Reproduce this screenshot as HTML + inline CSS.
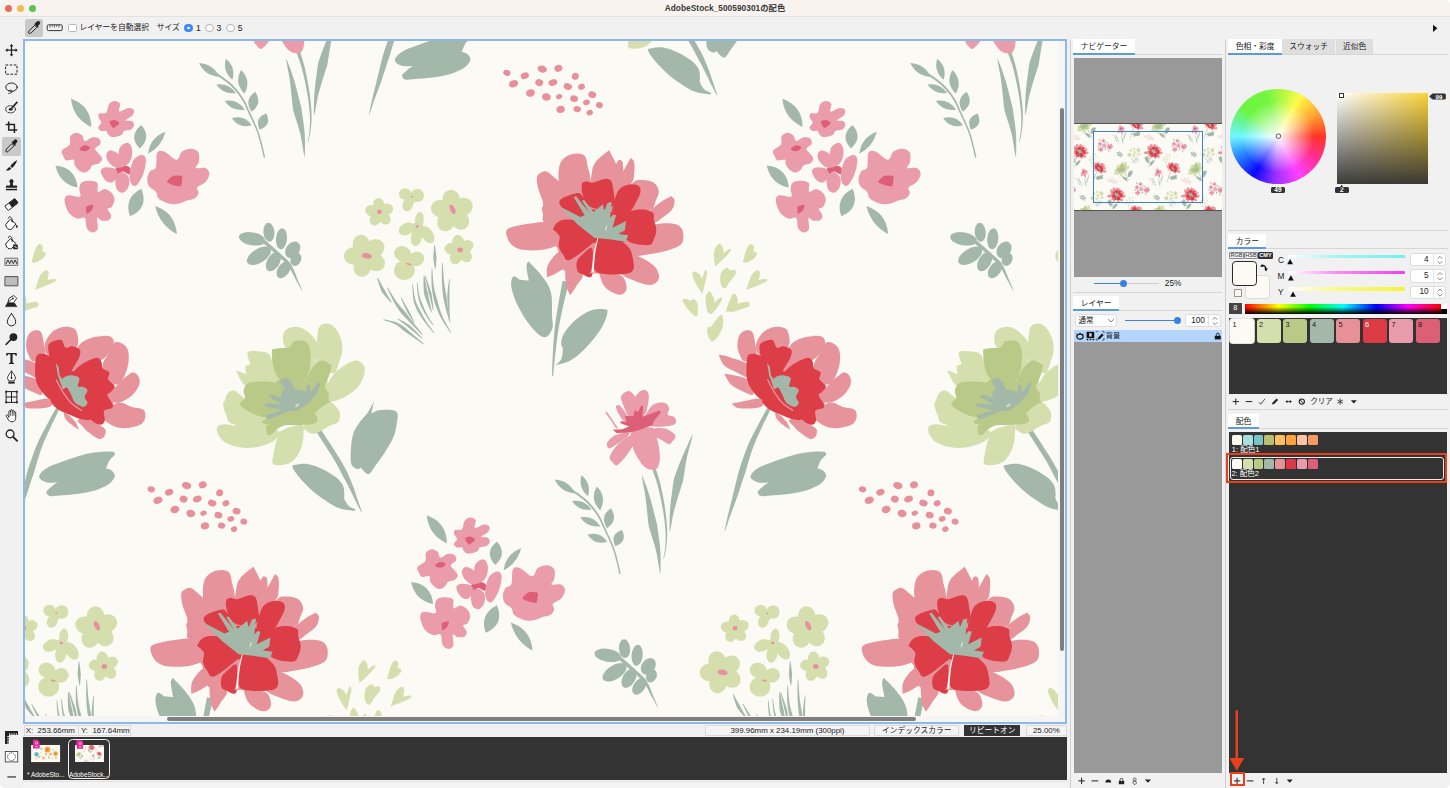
<!DOCTYPE html>
<html lang="ja">
<head>
<meta charset="utf-8">
<title>AdobeStock_500590301の配色</title>
<style>
*{box-sizing:border-box;margin:0;padding:0}
html,body{width:1450px;height:788px;overflow:hidden;background:#fff}
#win{left:0;top:0;width:1450px;height:788px;background:#f1f1f1;border-radius:5px}
body{position:relative;font-family:"Liberation Sans","Noto Sans CJK JP",sans-serif;font-size:9px;color:#222;-webkit-font-smoothing:antialiased}
.a{position:absolute}
.t{position:absolute;white-space:nowrap;line-height:1}
#titlebar{left:0;top:0;width:1450px;height:17px;background:#f8f3ee;border-bottom:1px solid #e6e1dc;border-radius:5px 5px 0 0}
.tl{position:absolute;top:4.8px;width:7.4px;height:7.4px;border-radius:50%}
#title{left:0;width:1450px;top:4px;text-align:center;font-weight:bold;font-size:8.3px;color:#3a3a3a;letter-spacing:0.05px}
.tab{position:absolute;background:#fff;border-bottom:2px solid #5a9ae0;font-size:8.6px;text-align:center;color:#222;line-height:1}
.tab2{position:absolute;background:#dfdfdf;font-size:8.6px;text-align:center;color:#222;line-height:1}
.hl{position:absolute;height:1px;background:#d6d6d6}
.vl{position:absolute;width:1px;background:#cfcfcf}
.box{position:absolute;background:#f4f4f4;border:1px solid #dadada;font-size:8.6px;line-height:1;text-align:center;white-space:nowrap;color:#222}
.num{position:absolute;background:#fff;border:1px solid #dcdcdc;border-radius:2.5px}
.sw{position:absolute;top:319px;width:24px;height:24.2px;border-radius:3px;font-size:7.4px;line-height:1;padding:1.6px 0 0 2.2px;color:#222}
.ms{position:absolute;width:9.9px;height:10px;border-radius:1.5px}
.lbl{position:absolute;background:#333;color:#fff;font-weight:bold;font-size:6.6px;line-height:6px;border-radius:1.5px;text-align:center}
</style>
</head>
<body>
<div class="a" id="win"></div>
<!-- title bar -->
<div class="a" id="titlebar"></div>
<div class="tl" style="left:4.7px;background:#ea6a5e"></div>
<div class="tl" style="left:16.7px;background:#f2bc4f"></div>
<div class="tl" style="left:28.8px;background:#5fc24f"></div>
<div class="t" id="title">AdobeStock_500590301の配色</div>

<!-- options bar -->
<div class="a" style="left:25px;top:19px;width:18px;height:18px;background:#c9c9c9;border-radius:2px"></div>
<svg class="a" style="left:25px;top:19px" width="18" height="18" viewBox="0 0 18 18">
  <path d="M4.2 14.6 L3.4 13.8 L4.3 11.6 L9.6 6.3 L11.7 8.4 L6.4 13.7 Z" fill="none" stroke="#222" stroke-width="1"/>
  <path d="M9.3 5.2 L12.8 8.7 L13.7 7.8 L12.9 7 L14.6 5.3 A1.9 1.9 0 0 0 11.9 2.6 L10.2 4.3 L10.2 4.3 Z" fill="#222"/>
</svg>
<svg class="a" style="left:46px;top:23px" width="18" height="10" viewBox="0 0 18 10">
  <rect x="1.2" y="1.8" width="15" height="5.8" rx="1.3" fill="none" stroke="#333" stroke-width="1"/>
  <path d="M4 2v2.6M6.2 2v1.8M8.4 2v2.6M10.6 2v1.8M12.8 2v2.6" stroke="#333" stroke-width="0.7" fill="none"/>
</svg>
<div class="a" style="left:68px;top:23.6px;width:8.8px;height:8.8px;background:#fff;border:0.8px solid #b9b9b9;border-radius:1.6px"></div>
<div class="t" id="t_auto" style="left:79.4px;top:24px;font-size:7.75px">レイヤーを自動選択</div>
<div class="t" id="t_size" style="left:156.8px;top:24px;font-size:7.75px">サイズ</div>
<div class="a" style="left:184.2px;top:23.7px;width:8.8px;height:8.8px;border-radius:50%;background:#fff;border:3px solid #3b8cec"></div>
<div class="t" style="left:196px;top:23.9px;font-size:8.6px">1</div>
<div class="a" style="left:205.4px;top:23.7px;width:8.8px;height:8.8px;border-radius:50%;background:#fff;border:0.8px solid #b5b5b5"></div>
<div class="t" style="left:216.6px;top:23.9px;font-size:8.6px">3</div>
<div class="a" style="left:226.4px;top:23.7px;width:8.8px;height:8.8px;border-radius:50%;background:#fff;border:0.8px solid #b5b5b5"></div>
<div class="t" style="left:237.7px;top:23.9px;font-size:8.6px">5</div>
<svg class="a" style="left:1431px;top:23px" width="8" height="10" viewBox="0 0 8 10"><path d="M2 1.7 L6.4 5.3 L2 8.9Z" fill="#111"/></svg>

<!-- left tools -->
<div class="a" style="left:2px;top:137px;width:18.5px;height:18.5px;background:#c9c9c9;border-radius:2px"></div>
<svg class="a" style="left:0;top:40px" width="24" height="410" viewBox="0 40 24 410" fill="none" stroke="#222" stroke-width="1.1" stroke-linecap="round" stroke-linejoin="round">
  <!-- move 50 -->
  <g transform="translate(11.5 50.2)"><path d="M-5 0H5M0 -5V5" stroke-width="1.2"/><path d="M-6.2 0l2.2-1.9v3.8zM6.2 0l-2.2-1.9v3.8zM0-6.2l-1.9 2.2h3.8zM0 6.2l-1.9-2.2h3.8z" fill="#222" stroke="none"/></g>
  <!-- marquee 69.5 -->
  <rect x="5.6" y="65" width="11.4" height="9.2" stroke-dasharray="2.6 1.5" stroke-linecap="butt" stroke-width="1"/>
  <!-- lasso 88 -->
  <g transform="translate(11.5 88.4)"><ellipse cx="0" cy="-1.2" rx="5.7" ry="4.2" stroke-width="1"/><path d="M-2.5 2.4c1.2-1.4 3.6-.6 3 1.1c-.5 1.3-2 1.5-3.3 1.5" stroke-width="0.9"/></g>
  <!-- quick select 108 -->
  <g transform="translate(11.5 108)"><ellipse cx="-1" cy="1.3" rx="5" ry="3.6" stroke-dasharray="2.2 1.2" stroke-width="0.9"/><path d="M5.4-5.6L0.6-0.2" stroke-width="1.7"/><ellipse cx="-0.8" cy="1.3" rx="1.9" ry="1.4" fill="#222" stroke="none"/></g>
  <!-- crop 127 -->
  <g transform="translate(11.5 127.2)" stroke-width="1.5" stroke-linecap="butt" stroke-linejoin="miter"><path d="M-2.8-5.8V2.9H5.8M-5.8-2.8H2.9V5.8"/></g>
  <!-- eyedropper 146.5 -->
  <g transform="translate(2.3 137.3)"><path d="M4.2 14.6 L3.4 13.8 L4.3 11.6 L9.6 6.3 L11.7 8.4 L6.4 13.7 Z" stroke-width="1"/><path d="M9.3 5.2 L12.8 8.7 L13.7 7.8 L12.9 7 L14.6 5.3 A1.9 1.9 0 0 0 11.9 2.6 L10.2 4.3 Z" fill="#222" stroke="none"/></g>
  <!-- brush 165.6 -->
  <g transform="translate(11.5 165.6)"><path d="M5.8-5.6C3-4.2 0.2-1.6-1.3 0.6L0.6 2.3C2.7 0.6 4.8-2.4 5.8-5.6Z" fill="#222" stroke="none"/><path d="M-1.9 1.3L-0.2 2.9C-1 4.6-3.6 5.4-5.9 4.7C-4.3 4.1-3.9 2.2-1.9 1.3Z" fill="#222" stroke="none"/></g>
  <!-- stamp 185 -->
  <g transform="translate(11.5 185.2)" fill="#222" stroke="none"><path d="M-1.3-2.2C-2.6-3.4-2.3-6 0-6C2.3-6 2.6-3.4 1.3-2.2L1.5 0.2H4.6C5.3 0.2 5.6 0.6 5.6 1.2V2.6H-5.6V1.2C-5.6 0.6-5.3 0.2-4.6 0.2H-1.5Z"/><rect x="-5.6" y="3.6" width="11.2" height="1.5"/></g>
  <!-- eraser 204.5 -->
  <g transform="translate(11.5 204.5) rotate(-38)"><rect x="-6.3" y="-2.8" width="12.6" height="5.6" rx="0.8" fill="#fff" stroke-width="0.9"/><rect x="-1.4" y="-2.8" width="7.7" height="5.6" rx="0.8" fill="#222" stroke="none"/></g>
  <!-- bucket 222.8 -->
  <g transform="translate(0 0)"><path d="M5.8 224.4L10.4 219.2L15.9 224L11.7 229.1C10 230 8 229.4 7 228Z" fill="#fff" stroke-width="1"/><path d="M8.3 218.2C8.6 215.6 12.2 216 12.3 221.2" stroke-width="0.9"/><circle cx="12.2" cy="221.6" r="0.8" fill="#222" stroke="none"/><path d="M16.8 224.6C18 226.4 18 227.9 16.8 227.9C15.6 227.9 15.6 226.4 16.8 224.6Z" fill="#222" stroke="none"/></g>
  <!-- bucket2 242.5 -->
  <g transform="translate(0 19.4)"><path d="M5.8 224.4L10.4 219.2L15.9 224L11.7 229.1C10 230 8 229.4 7 228Z" fill="#fff" stroke-width="1"/><path d="M8.3 218.2C8.6 215.6 12.2 216 12.3 221.2" stroke-width="0.9"/><circle cx="12.2" cy="221.6" r="0.8" fill="#222" stroke="none"/><rect x="13.2" y="225.2" width="4.6" height="4.6" fill="#222" stroke="none"/><rect x="14.4" y="226.4" width="1.1" height="1.1" fill="#fff" stroke="none"/><rect x="15.5" y="227.5" width="1.1" height="1.1" fill="#fff" stroke="none"/></g>
  <!-- wave 262 -->
  <g transform="translate(11.5 261.8)"><rect x="-6.2" y="-3.6" width="12.4" height="7.2" fill="#ddd" stroke="#444" stroke-width="0.7"/><path d="M-5.4 1.8L-3.6-1.8L-1.8 1.8L0-1.8L1.8 1.8L3.6-1.8L5.4 1.8" stroke-width="0.9"/></g>
  <!-- rect 281 -->
  <rect x="5.3" y="276.6" width="12.6" height="9.2" fill="#bdbdbd" stroke="#444" stroke-width="0.9"/>
  <!-- pen-layer 300.7 -->
  <g transform="translate(11.5 300.7)"><path d="M-6.2 5.6L-4.4 2.2H3.2L5.4 5.6Z" fill="#222" stroke="none"/><path d="M-6 5.9H5.4" stroke-width="0.8"/><path d="M-3.6 1.6L-2.3-2.6L2.4-5.2L5.2-2.4L2.2 1.9Z" fill="#fff" stroke-width="0.9"/><path d="M-3.3 1.3L0.6-1.6" stroke-width="0.8"/><circle cx="1.4" cy="-2.2" r="0.9" fill="#222" stroke="none"/></g>
  <!-- drop 320 -->
  <path d="M11.5 313.6C13.6 316.6 15.7 319.2 15.7 321.7A4.2 4.2 0 0 1 7.3 321.7C7.3 319.2 9.4 316.6 11.5 313.6Z" stroke-width="1"/>
  <!-- dodge 339 -->
  <g transform="translate(11.5 339)"><circle cx="1.9" cy="-1.9" r="3.9" fill="#222" stroke="none"/><path d="M-0.8 0.8L-5.4 5.4" stroke-width="1.5"/></g>
  <!-- T 358.5 -->
  <g transform="translate(11.5 358.5)" fill="#222" stroke="none"><path d="M-5.2-5.4H5.2V-2.6H4.3C4.1-3.7 3.6-4.2 2.4-4.2H1.1V3.6C1.1 4.4 1.5 4.6 2.6 4.7V5.4H-2.6V4.7C-1.5 4.6-1.1 4.4-1.1 3.6V-4.2H-2.4C-3.6-4.2-4.1-3.7-4.3-2.6H-5.2Z"/></g>
  <!-- pen 377.5 -->
  <g transform="translate(11.5 377.5)"><path d="M0-6.4C1.4-4.3 4-1.6 4 0.8L2.7 3.4H-2.7L-4 0.8C-4-1.6-1.4-4.3 0-6.4Z" fill="#fff" stroke-width="0.9"/><path d="M0-5.6V-0.4" stroke-width="0.8"/><circle cx="0" cy="0.4" r="1" fill="#222" stroke="none"/><rect x="-3.2" y="4.2" width="6.4" height="1.9" fill="#222" stroke="none"/></g>
  <!-- grid 397 -->
  <g transform="translate(11.5 397)" stroke-width="1" stroke-linecap="butt"><rect x="-5.4" y="-5.4" width="10.8" height="10.8"/><path d="M-5.4 0H5.4M0-5.4V5.4"/><g fill="#222" stroke="none"><rect x="-6.3" y="-6.3" width="1.9" height="1.9"/><rect x="4.4" y="-6.3" width="1.9" height="1.9"/><rect x="-6.3" y="4.4" width="1.9" height="1.9"/><rect x="4.4" y="4.4" width="1.9" height="1.9"/></g></g>
  <!-- hand 415.8 -->
  <g transform="translate(11.5 415.8)"><path d="M-2.6 1.2V-4.2C-2.6-5.4-0.9-5.4-0.9-4.2V-5.3C-0.9-6.5 0.8-6.5 0.8-5.3V-4.6C0.8-5.8 2.5-5.8 2.5-4.6V-3.2C2.5-4.3 4.2-4.3 4.2-3.2V2C4.2 4.4 2.8 6 0.6 6C-1.6 6-2.6 4.9-3.6 3.2L-5.2 0.4C-5.7-0.6-4.4-1.4-3.7-0.5Z" fill="#fff" stroke-width="0.9"/><path d="M-0.9-4.2V-0.4M0.8-4.6V-0.4M2.5-3.2V-0.2" stroke-width="0.7"/></g>
  <!-- zoom 435.3 -->
  <g transform="translate(11.5 435.3)"><circle cx="-1.4" cy="-1.4" r="3.9" stroke-width="1.3"/><path d="M1.6 1.6L5.6 5.6" stroke-width="1.8"/></g>
</svg>

<!-- left bottom icons -->
<svg class="a" style="left:0;top:726px" width="24" height="60" viewBox="0 726 24 60" fill="#222">
  <path d="M5 731H18V735H16.8V733.2H15.8V735H14.6V733.2H13.6V735H12.4V733.2H11.4V735H10.2V733.2H9.2V735H9V736H7.2V737H9V738.2H7.2V739.2H9V740.4H7.2V741.4H9V742.6H7.2V743.6H9V744H5Z"/>
  <rect x="5.3" y="751.5" width="12.4" height="10.4" fill="#fff" stroke="#444" stroke-width="0.9"/>
  <circle cx="11.5" cy="756.7" r="3.9" fill="none" stroke="#333" stroke-width="0.8" stroke-dasharray="1.6 0.8"/>
  <rect x="7.4" y="776.4" width="8.6" height="1.1"/>
</svg>
<!-- canvas frame -->
<div class="a" style="left:23px;top:39px;width:1044px;height:685.4px;background:#f5f5f5;border:2px solid #8fb7e8"></div>
<svg class="a" style="left:25px;top:41px" width="1033.4" height="675" viewBox="25 41 1033.4 675"><defs><g id="cell">
<!-- a_redflower.svg -->
<g transform="translate(490 250) scale(0.16552)">
<path d="M438.5 185.7L436.6 196.5L434 210.8L430.8 227.8L427.2 246.8L423.3 267L419.5 287.6L415.8 307.8L412.5 327L409.5 345.3L406.6 363.8L403.6 382.5L400.7 401.4L397.9 420.4L395.3 439.6L392.8 458.9L390.6 478.5L388.6 498.5L386.7 519L385.1 539.9L383.5 560.9L382.2 581.5L380.9 601.7L379.8 621.1L378.8 639.4L377.9 657.4L377.1 675.6L376.4 693.5L375.9 710.7L375.5 726.6L375.2 740.7L375 752.6L375 761.8L381 762.2L382.1 753.1L383.3 741.2L384.6 727.1L386.1 711.3L387.7 694.3L389.4 676.5L391.3 658.4L393.2 640.6L395.3 622.4L397.5 603.2L399.8 583.1L402.2 562.6L404.8 541.9L407.5 521.3L410.4 501.1L413.4 481.5L416.6 462.5L420.1 443.5L423.8 424.8L427.5 406.1L431.4 387.6L435.4 369.3L439.4 351.1L443.5 333L447.7 314.3L452.4 294.5L457.2 274.3L462.1 254.4L466.7 235.8L471 219L474.7 204.9L477.5 194.3Z" fill="#a4b8aa"/>
<path d="M232 70C232 70 280.3 116.7 300 140C319.7 163.3 338 186.7 350 210C362 233.3 367.8 248.3 372 280C376.2 311.7 374 368.3 375 400C376 431.7 383 449.7 378 470C373 490.3 358 514.5 345 522C332 529.5 319.2 528.7 300 515C280.8 501.3 251.7 469.2 230 440C208.3 410.8 185.8 371.7 170 340C154.2 308.3 142 275 135 250C128 225 126.3 205.3 128 190C129.7 174.7 136.3 159.7 145 158C153.7 156.3 180 180 180 180C180 180 235 185 235 185C235 185 220.5 119.2 220 100C219.5 80.8 232 70 232 70Z" fill="#a4b8aa"/>
<path d="M395 695C395 695 422.5 675.8 430 660C437.5 644.2 440 616.7 440 600C440 583.3 428.3 576.7 430 560C431.7 543.3 435 523.3 450 500C465 476.7 493.3 442.5 520 420C546.7 397.5 581.7 375.3 610 365C638.3 354.7 673.3 356.8 690 358C706.7 359.2 710 358.3 710 372C710 385.7 701.7 415.3 690 440C678.3 464.7 661.7 491.7 640 520C618.3 548.3 586.7 585 560 610C533.3 635 507.5 655.8 480 670C452.5 684.2 395 695 395 695Z" fill="#a4b8aa"/>
<path d="M345 165C345 165 337.5 115.8 350 90C362.5 64.2 400 15 420 10C440 5 461.7 45.8 470 60C478.3 74.2 481.7 81.7 470 95C458.3 108.3 420.8 128.3 400 140C379.2 151.7 345 165 345 165Z" fill="#e7939b"/>
<path d="M455 100C456.7 70.8 452.5 33.3 470 40C487.5 46.7 551.7 110 560 140C568.3 170 532.5 198 520 220C507.5 242 485 272 485 272C485 272 465 243.7 460 215C455 186.3 453.3 129.2 455 100Z" fill="#e7939b"/>
<path d="M650 70C654.2 60 675 115 700 130C725 145 779.2 142.5 800 160C820.8 177.5 827.5 216.7 825 235C822.5 253.3 802.5 268.3 785 270C767.5 271.7 738.3 258.3 720 245C701.7 231.7 686.7 219.2 675 190C663.3 160.8 645.8 80 650 70Z" fill="#e7939b"/>
<path d="M850 30C871.7 20 876.7 29.2 900 40C923.3 50.8 970 76.7 990 95C1010 113.3 1016.7 134.2 1020 150C1023.3 165.8 1020 179.7 1010 190C1000 200.3 983.3 212.8 960 212C936.7 211.2 896.7 195.3 870 185C843.3 174.7 816.7 164.2 800 150C783.3 135.8 761.7 120 770 100C778.3 80 828.3 40 850 30Z" fill="#e7939b"/>
<path d="M860 -10C890.8 -16.2 1051.7 -9.2 1075 -5C1098.3 -0.8 1030.8 8.8 1000 15C969.2 21.2 913.3 36.2 890 32C866.7 27.8 829.2 -3.8 860 -10Z" fill="#e7939b"/>
<path d="M525 80C531.7 65.8 554.7 39.2 570 25C585.3 10.8 608.3 -15.8 617 -5C625.7 5.8 621.8 64.2 622 90C622.2 115.8 621.7 137.5 618 150C614.3 162.5 609.7 165.8 600 165C590.3 164.2 571.7 154.2 560 145C548.3 135.8 535.8 120.8 530 110C524.2 99.2 518.3 94.2 525 80Z" fill="#dd3d46"/>
<path d="M638 -10C671.3 -21.7 813 -25 850 -10C887 5 862.5 57.5 860 80C857.5 102.5 846.7 115.8 835 125C823.3 134.2 805 135.8 790 135C775 134.2 745 120 745 120C745 120 730.8 145 720 145C709.2 145 691.7 134.2 680 120C668.3 105.8 657 81.7 650 60C643 38.3 604.7 1.7 638 -10Z" fill="#dd3d46"/>
<path d="M420 -10C442.5 -18.3 556.7 -18.3 575 -10C593.3 -1.7 547.5 28 530 40C512.5 52 485 62 470 62C455 62 448.3 52 440 40C431.7 28 397.5 -1.7 420 -10Z" fill="#dd3d46"/>
</g>
<g transform="translate(490 140) scale(0.16552)">
<path d="M283 232C283.8 212 294.7 206.7 305 200C315.3 193.3 325.8 183.7 345 192C364.2 200.3 384.2 227 420 250C455.8 273 550 301.7 560 330C570 358.3 515 408.3 480 420C445 431.7 380 416.7 350 400C320 383.3 311.2 348 300 320C288.8 292 282.2 252 283 232Z" fill="#e7939b"/>
<path d="M415 185C417.5 166.7 420.8 145 430 130C439.2 115 453.3 103 470 95C486.7 87 512.5 81.2 530 82C547.5 82.8 565 87 575 100C585 113 585 139.2 590 160C595 180.8 603.3 196.7 605 225C606.7 253.3 629.2 317.5 600 330C570.8 342.5 460.8 315 430 300C399.2 285 417.5 259.2 415 240C412.5 220.8 412.5 203.3 415 185Z" fill="#e7939b"/>
<path d="M615 200C618.3 171.7 622.5 153 640 130C657.5 107 720 62 720 62C720 62 738 96.2 745 110C752 123.8 762 145 762 145C762 145 775 122 775 122C775 122 795 118.7 800 130C805 141.3 805 190 805 190C805 190 850 108 850 108C850 108 866.3 116.3 870 130C873.7 143.7 874.5 168.3 872 190C869.5 211.7 873.7 236.7 855 260C836.3 283.3 799.2 323.3 760 330C720.8 336.7 644.2 321.7 620 300C595.8 278.3 611.7 228.3 615 200Z" fill="#e7939b"/>
<path d="M860 262C880 239 898.3 242.7 920 242C941.7 241.3 973.3 246.7 990 258C1006.7 269.3 1018.3 291.3 1020 310C1021.7 328.7 1007.5 351.7 1000 370C992.5 388.3 996.7 408.3 975 420C953.3 431.7 899.2 446.7 870 440C840.8 433.3 801.7 409.7 800 380C798.3 350.3 840 285 860 262Z" fill="#e7939b"/>
<path d="M975 420C998.3 401.7 1020 383.3 1040 370C1060 356.7 1095 340 1095 340C1095 340 1114.2 351.7 1115 365C1115.8 378.3 1112.5 402.5 1100 420C1087.5 437.5 1058.3 456.7 1040 470C1021.7 483.3 1013.3 498.3 990 500C966.7 501.7 902.5 493.3 900 480C897.5 466.7 951.7 438.3 975 420Z" fill="#e7939b"/>
<path d="M1000 510C1041.7 500.8 1075 502.5 1100 505C1125 507.5 1138.7 514.2 1150 525C1161.3 535.8 1167.2 552.5 1168 570C1168.8 587.5 1169.7 614.2 1155 630C1140.3 645.8 1112.5 655 1080 665C1047.5 675 998.3 685.8 960 690C921.7 694.2 868.3 711.7 850 690C831.7 668.3 825 590 850 560C875 530 958.3 519.2 1000 510Z" fill="#e7939b"/>
<path d="M100 545C110 527.5 143.3 523.3 180 515C216.7 506.7 280 499.2 320 495C360 490.8 398.3 472.5 420 490C441.7 507.5 453.3 575 450 600C446.7 625 425 629.2 400 640C375 650.8 336.7 661.7 300 665C263.3 668.3 210 667.5 180 660C150 652.5 133.3 639.2 120 620C106.7 600.8 90 562.5 100 545Z" fill="#e7939b"/>
<path d="M315 405C320 395.8 330.8 392.5 350 395C369.2 397.5 413.3 404.2 430 420C446.7 435.8 466.7 477.5 450 490C433.3 502.5 351.7 501.7 330 495C308.3 488.3 322.5 465 320 450C317.5 435 310 414.2 315 405Z" fill="#e7939b"/>
<path d="M420 640C440 620 513.3 603.3 560 600C606.7 596.7 650 605 700 620C750 635 826.7 673.3 860 690C893.3 706.7 875 703.3 900 720C925 736.7 1016.7 776.7 1010 790C1003.3 803.3 948.3 798.3 860 800C771.7 801.7 550 813.3 480 800C410 786.7 450 746.7 440 720C430 693.3 400 660 420 640Z" fill="#e7939b"/>
<path d="M330 300C366.7 241.7 511.7 250 600 250C688.3 250 801.7 258.3 860 300C918.3 341.7 950 436.7 950 500C950 563.3 935 646.7 860 680C785 713.3 580 713.3 500 700C420 686.7 408.3 666.7 380 600C351.7 533.3 293.3 358.3 330 300Z" fill="#e7939b"/>
<path d="M520 420C550 405 645 425 700 430C755 435 816.7 435 850 450C883.3 465 908.3 491.7 900 520C891.7 548.3 841.7 601.7 800 620C758.3 638.3 696.7 646.7 650 630C603.3 613.3 541.7 555 520 520C498.3 485 490 435 520 420Z" fill="#dd3d46"/>
<path d="M555 265C558.3 251.7 569.2 251.2 580 250C590.8 248.8 601.7 260.5 620 258C638.3 255.5 671.7 237.2 690 235C708.3 232.8 720.8 234.2 730 245C739.2 255.8 741.7 277.5 745 300C748.3 322.5 757.5 360 750 380C742.5 400 725 416.7 700 420C675 423.3 623.3 415 600 400C576.7 385 567.5 352.5 560 330C552.5 307.5 551.7 278.3 555 265Z" fill="#dd3d46"/>
<path d="M760 340C768.3 315 775 302 790 290C805 278 831.7 269.7 850 268C868.3 266.3 890.3 271.3 900 280C909.7 288.7 911.3 303.3 908 320C904.7 336.7 889.7 361.7 880 380C870.3 398.3 863.3 415 850 430C836.7 445 818.3 468.3 800 470C781.7 471.7 746.7 461.7 740 440C733.3 418.3 751.7 365 760 340Z" fill="#dd3d46"/>
<path d="M850 430C873.3 420 907.5 418.3 930 420C952.5 421.7 975 430 985 440C995 450 986.7 463.3 990 480C993.3 496.7 1005 520 1005 540C1005 560 997.5 584.2 990 600C982.5 615.8 983.3 631.7 960 635C936.7 638.3 876.7 632.5 850 620C823.3 607.5 810 583.3 800 560C790 536.7 781.7 501.7 790 480C798.3 458.3 826.7 440 850 430Z" fill="#dd3d46"/>
<path d="M420 385C415 370 421.7 360.8 440 350C458.3 339.2 510 321.7 530 320C550 318.3 548.3 326.7 560 340C571.7 353.3 600 376.7 600 400C600 423.3 581.7 473.3 560 480C538.3 486.7 493.3 455.8 470 440C446.7 424.2 425 400 420 385Z" fill="#dd3d46"/>
<path d="M380 540C380 540 391.7 510 405 500C418.3 490 434.2 480 460 480C485.8 480 530 481.7 560 500C590 518.3 633.3 566.7 640 590C646.7 613.3 626.7 617.5 600 640C573.3 662.5 506.7 716.7 480 725C453.3 733.3 450.8 704.2 440 690C429.2 675.8 418.3 658.3 415 640C411.7 621.7 425.8 596.7 420 580C414.2 563.3 380 540 380 540Z" fill="#dd3d46"/>
<path d="M645 620C650 601.7 640.8 593.3 660 590C679.2 586.7 731.7 591.7 760 600C788.3 608.3 813.3 623.3 830 640C846.7 656.7 856.7 673.3 860 700C863.3 726.7 885 783.3 850 800C815 816.7 686.7 816.7 650 800C613.3 783.3 630.8 730 630 700C629.2 670 640 638.3 645 620Z" fill="#dd3d46"/>
<path d="M525 735C529.2 716.7 544.5 703.3 560 690C575.5 676.7 610.3 636.7 618 655C625.7 673.3 619.8 775.8 606 800C592.2 824.2 548.5 810.8 535 800C521.5 789.2 520.8 753.3 525 735Z" fill="#dd3d46"/>
<path d="M420 400L545 465L572 455L505 345L520 340L600 440L555 365L570 362L625 435L682 388L690 430L710 380L735 375L725 470L745 450L762 455L740 530L822 490L815 545L775 568L835 575L820 615L720 600L630 590L530 510Z" fill="#a4b8aa"/>
<path d="M698 545C699.3 540.8 704.7 524.2 706 520" fill="none" stroke="#fbfaf5" stroke-width="5" stroke-linecap="round"/>
<path d="M649.6 591.4L647.8 597.9L645.4 606.3L642.6 616.4L639.5 627.7L636.3 640L633.2 652.9L630.3 666.1L627.8 679.4L625.6 693.7L623.5 710.1L621.5 727.5L619.6 745L617.9 761.9L616.4 777.2L615.1 790L614 799.5L626 800.5L626.6 791L627.5 778.2L628.6 762.8L629.9 746L631.3 728.4L632.8 711.1L634.5 694.8L636.2 680.6L638.2 667.6L640.6 654.5L643.3 641.6L646 629.3L648.7 617.9L651.1 607.8L653 599.2L654.4 592.6Z" fill="#fbfaf5"/>
</g>
<!-- b_pinkcluster.svg -->
<g transform="translate(40 88) scale(0.13793)">
<path d="M225 78Q240.1 222.1 372 282Q369.9 128.6 225 78Z" fill="#a4b8aa"/>
<path d="M735 268Q636.8 346 722 438Q812.3 359.4 735 268Z" fill="#a4b8aa"/>
<path d="M910 318Q798.1 358.8 783 477Q882.4 426.2 910 318Z" fill="#a4b8aa"/>
<path d="M112 562Q139.7 694.3 272 722Q258.5 575.5 112 562Z" fill="#a4b8aa"/>
<path d="M540 95C553.3 94.2 574.2 102.5 580 115C585.8 127.5 565 165 575 170C585 175 622.5 146.7 640 145C657.5 143.3 675 150.8 680 160C685 169.2 680 187.5 670 200C660 212.5 620.8 228.3 620 235C619.2 241.7 654.7 234.2 665 240C675.3 245.8 682.8 260 682 270C681.2 280 672 293.3 660 300C648 306.7 621.7 303.3 610 310C598.3 316.7 605 332.5 590 340C575 347.5 536.7 356.7 520 355C503.3 353.3 496.7 337.5 490 330C483.3 322.5 488.3 313.3 480 310C471.7 306.7 449.7 314.2 440 310C430.3 305.8 421.2 295 422 285C422.8 275 444.5 261.7 445 250C445.5 238.3 427.5 225.8 425 215C422.5 204.2 420.8 190.8 430 185C439.2 179.2 468.3 190.8 480 180C491.7 169.2 490 134.2 500 120C510 105.8 526.7 95.8 540 95Z" fill="#ea9cab"/>
<path d="M505 245C508.3 237 528.3 230.3 540 232C551.7 233.7 575.8 245.7 575 255C574.2 264.3 544.2 283.8 535 288C525.8 292.2 525 287.2 520 280C515 272.8 501.7 253 505 245Z" fill="#dc5f77"/>
<path d="M265 325C279.2 324.2 295 335 305 345C315 355 313.3 382.8 325 385C336.7 387.2 358.3 361.3 375 358C391.7 354.7 414.5 357.2 425 365C435.5 372.8 442.2 392.5 438 405C433.8 417.5 403 429.2 400 440C397 450.8 411.7 458.3 420 470C428.3 481.7 448.3 497.5 450 510C451.7 522.5 441.7 536.7 430 545C418.3 553.3 391.7 552.5 380 560C368.3 567.5 370 581.3 360 590C350 598.7 333.3 611.2 320 612C306.7 612.8 291.7 604.5 280 595C268.3 585.5 255.8 567.5 250 555C244.2 542.5 255 525 245 520C235 515 202.5 529.2 190 525C177.5 520.8 175.3 506.7 170 495C164.7 483.3 150.5 469.2 158 455C165.5 440.8 204.7 427.5 215 410C225.3 392.5 211.7 364.2 220 350C228.3 335.8 250.8 325.8 265 325Z" fill="#ea9cab"/>
<path d="M290 435C295 428.3 318 415.5 330 415C342 414.5 360.3 425.3 362 432C363.7 438.7 350.3 451.2 340 455C329.7 458.8 308.3 458.3 300 455C291.7 451.7 285 441.7 290 435Z" fill="#dc5f77"/>
<path d="M545 590C549.2 579.2 572.5 562.5 590 560C607.5 557.5 640 564.2 650 575C660 585.8 658.3 620 650 625C641.7 630 614.2 605 600 605C585.8 605 574.2 627.5 565 625C555.8 622.5 540.8 600.8 545 590Z" fill="#dc5f77"/>
<path d="M625 398C638.3 396.3 652.8 406.3 660 420C667.2 433.7 671.3 458.3 668 480C664.7 501.7 658 533.3 640 550C622 566.7 583.3 581.7 560 580C536.7 578.3 513.3 555 500 540C486.7 525 480 504.2 480 490C480 475.8 490 460 500 455C510 450 528.3 455.8 540 460C551.7 464.2 570 480 570 480C570 480 570.8 443.7 580 430C589.2 416.3 611.7 399.7 625 398Z" fill="#ea9cab"/>
<path d="M740 485C754.7 485 766.3 497.5 768 520C769.7 542.5 761.3 589.2 750 620C738.7 650.8 715 693.3 700 705C685 716.7 668.3 704.2 660 690C651.7 675.8 646.7 648.3 650 620C653.3 591.7 665 542.5 680 520C695 497.5 725.3 485 740 485Z" fill="#ea9cab"/>
<path d="M440 600C441.7 585 461.7 576.7 480 575C498.3 573.3 536.7 579.2 550 590C563.3 600.8 565 624.2 560 640C555 655.8 535 680.8 520 685C505 689.2 483.3 679.2 470 665C456.7 650.8 438.3 615 440 600Z" fill="#ea9cab"/>
<path d="M550 640C557.5 620 584.2 608.3 600 610C615.8 611.7 638.3 631.7 645 650C651.7 668.3 647.5 701.7 640 720C632.5 738.3 614.2 758.3 600 760C585.8 761.7 563.3 750 555 730C546.7 710 542.5 660 550 640Z" fill="#ea9cab"/>
</g>
<g transform="translate(40 160) scale(0.13793)">
<path d="M735 208Q606.7 272 652 408Q791.4 348.6 735 208Z" fill="#a4b8aa"/>
<path d="M835 333Q867.5 470.4 992 537Q981.7 382.5 835 333Z" fill="#a4b8aa"/>
<path d="M850 -52C860 -71.5 876.7 -70.3 900 -62C923.3 -53.7 968.3 -2 990 -2C1011.7 -2 1011.7 -48.7 1030 -62C1048.3 -75.3 1080 -83.7 1100 -82C1120 -80.3 1141.7 -68.7 1150 -52C1158.3 -35.3 1153.3 -0.3 1150 18C1146.7 36.3 1121.7 51.3 1130 58C1138.3 64.7 1183.7 51 1200 58C1216.3 65 1228 83 1228 100C1228 117 1214.7 143.3 1200 160C1185.3 176.7 1148.3 186.7 1140 200C1131.7 213.3 1153.3 226.7 1150 240C1146.7 253.3 1135 270.8 1120 280C1105 289.2 1080 288.7 1060 295C1040 301.3 1021.7 314.7 1000 318C978.3 321.3 953.3 321.3 930 315C906.7 308.7 875 294.2 860 280C845 265.8 851.7 245 840 230C828.3 215 800.3 206.7 790 190C779.7 173.3 776.3 148.3 778 130C779.7 111.7 789.7 92.5 800 80C810.3 67.5 831.7 77 840 55C848.3 33 840 -32.5 850 -52Z" fill="#ea9cab"/>
<path d="M920 158C920.5 151.5 954 119 965 115C976 111 1024.5 110.5 1030 118C1035.5 125.5 1027 183.8 1020 190C1013 196.2 970 183.2 960 180C950 176.8 919.5 164.5 920 158Z" fill="#dc5f77"/>
<path d="M300 165C310.8 155 330.8 150 350 150C369.2 150 403.3 151.7 415 165C426.7 178.3 410.8 222.5 420 230C429.2 237.5 453.3 208.3 470 210C486.7 211.7 508.3 226.7 520 240C531.7 253.3 540 273.3 540 290C540 306.7 528.3 329.2 520 340C511.7 350.8 490.8 345 490 355C489.2 365 513.3 386.7 515 400C516.7 413.3 510.8 428.3 500 435C489.2 441.7 464.2 442.5 450 440C435.8 437.5 420.3 410 415 420C409.7 430 423.8 482.5 418 500C412.2 517.5 393 525.8 380 525C367 524.2 349.2 512.5 340 495C330.8 477.5 336.7 431.7 325 420C313.3 408.3 288.3 430 270 425C251.7 420 229.2 405.8 215 390C200.8 374.2 190.8 349.2 185 330C179.2 310.8 175.8 287.5 180 275C184.2 262.5 191.7 256.7 210 255C228.3 253.3 277.5 272.5 290 265C302.5 257.5 283.3 226.7 285 210C286.7 193.3 289.2 175 300 165Z" fill="#ea9cab"/>
<path d="M335 340C339.5 333.5 381 322.5 385 325C389 327.5 379.5 358.5 375 365C370.5 371.5 344 392.5 340 390C336 387.5 330.5 346.5 335 340Z" fill="#dc5f77"/>
</g>
<!-- c_dots.svg -->
<g transform="translate(380 36) scale(0.24879)">
<ellipse cx="510" cy="148" rx="15" ry="12" transform="rotate(15 510 148)" fill="#e8909a"/>
<ellipse cx="582" cy="160" rx="17" ry="13" transform="rotate(-20 582 160)" fill="#e8909a"/>
<ellipse cx="652" cy="133" rx="19" ry="14" transform="rotate(15 652 133)" fill="#e8909a"/>
<ellipse cx="717" cy="130" rx="16" ry="14" transform="rotate(-20 717 130)" fill="#e8909a"/>
<ellipse cx="785" cy="162" rx="14" ry="14" transform="rotate(15 785 162)" fill="#e8909a"/>
<ellipse cx="537" cy="192" rx="19" ry="14" transform="rotate(-20 537 192)" fill="#e8909a"/>
<ellipse cx="640" cy="187" rx="16" ry="14" transform="rotate(15 640 187)" fill="#e8909a"/>
<ellipse cx="695" cy="187" rx="18" ry="13" transform="rotate(-20 695 187)" fill="#e8909a"/>
<ellipse cx="755" cy="203" rx="17" ry="13" transform="rotate(15 755 203)" fill="#e8909a"/>
<ellipse cx="810" cy="204" rx="14" ry="12" transform="rotate(-20 810 204)" fill="#e8909a"/>
<ellipse cx="853" cy="236" rx="16" ry="13" transform="rotate(15 853 236)" fill="#e8909a"/>
<ellipse cx="605" cy="229" rx="18" ry="15" transform="rotate(-20 605 229)" fill="#e8909a"/>
<ellipse cx="669" cy="245" rx="18" ry="15" transform="rotate(15 669 245)" fill="#e8909a"/>
<ellipse cx="720" cy="244" rx="13" ry="10" transform="rotate(-20 720 244)" fill="#e8909a"/>
<ellipse cx="780" cy="252" rx="16" ry="13" transform="rotate(15 780 252)" fill="#e8909a"/>
<ellipse cx="830" cy="267" rx="14" ry="11" transform="rotate(-20 830 267)" fill="#e8909a"/>
<ellipse cx="882" cy="278" rx="14" ry="12" transform="rotate(15 882 278)" fill="#e8909a"/>
<ellipse cx="726" cy="295" rx="17" ry="14" transform="rotate(-20 726 295)" fill="#e8909a"/>
<ellipse cx="793" cy="294" rx="15" ry="12" transform="rotate(15 793 294)" fill="#e8909a"/>
<ellipse cx="843" cy="308" rx="13" ry="11" transform="rotate(-20 843 308)" fill="#e8909a"/>
</g>
<!-- d_pinkstem.svg -->
<g transform="translate(545 470) scale(0.13793)">
<path d="M195.6 156.1L203.6 161.7L214.2 169.1L226.9 177.7L240.8 187.5L255.3 197.9L269.7 208.7L283.2 219.6L295.2 230.1L306.2 240.8L317.1 251.9L327.7 263.5L338 275.3L347.8 287.3L357.3 299.4L366.2 311.5L374.6 323.6L382 335.2L388.6 346.3L394.4 357.3L400 368.6L405.5 380.4L411.2 393.2L417.5 407.1L424.6 422.5L432.6 439.6L441.4 457.9L450.6 477.4L460.1 497.7L469.5 518.5L478.6 539.7L487.1 560.9L494.8 581.8L501.9 603.9L508.9 628.2L515.5 653.5L521.8 678.7L527.5 702.7L532.5 724.4L536.8 742.6L540.1 756.2L549.9 753.8L546.6 740.2L542.5 722.1L537.6 700.4L532 676.3L525.8 650.9L519.2 625.4L512.3 600.8L505.2 578.2L497.5 556.9L489 535.4L479.9 514L470.5 492.9L461.1 472.5L452 452.9L443.3 434.5L435.4 417.5L428.5 402.1L422.4 388.2L416.7 375.3L411.3 363.3L405.7 351.6L399.7 340.2L393 328.5L385.4 316.4L376.9 304L367.9 291.5L358.3 279L348.3 266.6L337.9 254.4L327.1 242.5L316.1 231L304.8 219.9L292.3 208.8L278.4 197.5L263.8 186.3L249.2 175.7L235.2 165.8L222.6 156.9L212.1 149.6L204.4 143.9Z" fill="#a4b8aa"/>
<path d="M70 68Q114.7 161.4 218 168Q173.3 74.6 70 68Z" fill="#a4b8aa"/>
<path d="M265 38Q238.5 129.5 312 190Q338.5 98.5 265 38Z" fill="#a4b8aa"/>
<path d="M375 120Q322.2 215.5 400 292Q452.8 196.5 375 120Z" fill="#a4b8aa"/>
<path d="M195 225Q247.2 300.5 338 287Q285.8 211.5 195 225Z" fill="#a4b8aa"/>
<path d="M478 278Q393.5 336.3 450 422Q534.5 363.7 478 278Z" fill="#a4b8aa"/>
<path d="M255 343Q307.6 423 402 407Q349.4 327 255 343Z" fill="#a4b8aa"/>
<path d="M558 435Q467.6 466.3 510 552Q600.4 520.7 558 435Z" fill="#a4b8aa"/>
<path d="M308 470Q361.5 548.1 452 520Q398.5 441.9 308 470Z" fill="#a4b8aa"/>
<path d="M702 40.3L703.5 52.8L706.1 69.1L709.5 88.3L713.5 109.7L717.7 132.7L722 156.5L726 180.3L729.4 203.4L732.3 226.7L735.2 251.3L737.9 276.8L740.6 302.8L743.3 329.1L746 355.3L748.7 381L751.6 406L758.4 429.6L765.4 452.7L772.5 475.2L779.5 497.2L786.3 518.9L792.7 540.3L798.8 561.4L804.2 582.4L809.1 604.4L813.5 628L817.6 652.1L821.4 675.9L824.9 698.3L828.1 718.4L831.1 735.3L834 748.1L836 747.9L836.9 734.9L837.6 717.8L838.1 697.4L838.4 674.6L838.3 650.4L837.9 625.6L837.1 601L835.8 577.6L833.9 555L831.4 532.4L828.5 509.6L825.3 486.8L821.9 463.8L818.6 440.7L815.3 417.5L812.4 394L806 370.4L799.6 345.7L793.3 320.3L786.9 294.7L780.5 269.1L774 244L767.4 219.7L760.6 196.6L753.4 173.7L745.7 150.4L737.8 127.4L729.9 105.3L722.3 84.8L715.2 66.5L709 51.3L704 39.7Z" fill="#a4b8aa"/>
<path d="M777.6 -6L781 3.7L785.5 16.1L790.8 30.9L796.5 47.4L802.6 65.3L808.6 84.1L814.4 103.3L819.6 122.6L824.6 142.6L829.7 164.3L834.7 187.1L839.7 210.6L844.5 234.2L848.9 257.5L853 280L856.7 301.3L859.9 321.6L862.9 341.5L865.5 361L867.8 380.1L869.8 398.6L871.5 416.5L872.8 433.7L873.9 450.2L874.6 465.9L874.9 480.8L874.8 495.1L874.4 508.8L873.8 522L873.1 534.8L872.2 547.3L871.2 559.6L870 571.9L868.4 584.5L866.6 596.9L864.6 608.9L862.7 620L860.9 629.9L859.5 638.3L858.5 644.7L861.5 645.3L863 639L865 630.7L867.3 620.9L869.8 609.9L872.3 598L874.8 585.5L877 572.9L878.8 560.4L880.3 548.1L881.8 535.6L883.1 522.7L884.3 509.3L885.3 495.5L885.9 481L886.2 465.8L886.1 449.8L885.6 433L884.8 415.5L883.7 397.4L882.2 378.7L880.5 359.4L878.4 339.6L876 319.3L873.3 298.7L870.2 277.2L866.6 254.4L862.7 230.8L858.4 206.9L854 183.2L849.5 160.1L844.9 138L840.4 117.4L835.6 97.6L830.2 77.8L824.6 58.4L819.1 40.1L813.8 23.2L809.1 8.2L805.2 -4.3L802.4 -14Z" fill="#a4b8aa"/>
<path d="M1070.1 -256.3L1064.5 -246L1057.4 -231.9L1049.3 -215L1040.6 -196.1L1031.5 -176.4L1022.6 -156.6L1014.1 -137.6L1006.5 -120.5L999.8 -105.1L993.4 -90.4L987.4 -76.2L981.5 -62.2L975.8 -48.1L970.1 -33.7L964.4 -18.8L958.5 -2.9L952.5 13.8L946.4 31.1L940.2 49L934.1 67.2L931.3 86.4L928.5 105.7L925.8 125L923.2 144.1L920.8 163.1L918.2 182.2L915.8 201.5L913.4 220.9L911.1 240.2L909.1 259.6L907.4 278.8L906 297.9L904.9 317.8L904 338.8L903.4 360.2L903.1 381.2L902.9 400.9L903.1 418.7L903.4 433.6L904 444.9L906 445.1L908.7 434.1L911.6 419.4L914.8 402L918.2 382.6L921.8 362L925.7 341.2L929.8 321L934 302.1L938.6 284.1L943.5 265.9L948.7 247.6L954.1 229.3L959.7 210.9L965.3 192.5L971.1 174.1L976.8 155.9L982.5 137.7L988.3 119.5L994.3 101.2L1000.3 83L1003.1 64.4L1005.9 46L1008.7 28.2L1011.5 10.9L1014.1 -5.5L1016.6 -21L1019 -36L1021.5 -50.6L1024 -65.2L1026.8 -80L1030 -95.4L1033.5 -111.5L1037.8 -129.4L1043.1 -149.2L1048.9 -170L1054.8 -190.9L1060.5 -210.8L1065.5 -228.9L1069.4 -244.1L1071.9 -255.7Z" fill="#a4b8aa"/>
</g>
<g transform="translate(545 385) scale(0.13793)">
<path d="M445 200C450.8 208.3 467.5 231.7 480 250C492.5 268.3 513.3 300 520 310" fill="none" stroke="#ea9cab" stroke-width="12" stroke-linecap="round"/>
<path d="M515 165C511.7 148 527.5 140.5 540 148C552.5 155.5 580 191.3 590 210C600 228.7 605 253.3 600 260C595 266.7 574.2 265.8 560 250C545.8 234.2 518.3 182 515 165Z" fill="#ea9cab"/>
<path d="M550 95C550 80 559.2 68.3 570 60C580.8 51.7 600.8 40.8 615 45C629.2 49.2 655 85 655 85C655 85 677.5 52.8 690 45C702.5 37.2 719.7 33 730 38C740.3 43 749.5 56.3 752 75C754.5 93.7 750.3 125.8 745 150C739.7 174.2 737.5 201.7 720 220C702.5 238.3 660 260 640 260C620 260 611.7 238.3 600 220C588.3 201.7 578.3 170.8 570 150C561.7 129.2 550 110 550 95Z" fill="#ea9cab"/>
<path d="M740 200C751.7 180 768.3 151.7 790 140C811.7 128.3 851.7 125 870 130C888.3 135 896.7 155.8 900 170C903.3 184.2 884.2 205 890 215C895.8 225 925 221.7 935 230C945 238.3 950.8 255 950 265C949.2 275 945 284.2 930 290C915 295.8 885 298.3 860 300C835 301.7 803.3 306.7 780 300C756.7 293.3 726.7 276.7 720 260C713.3 243.3 728.3 220 740 200Z" fill="#ea9cab"/>
<path d="M780 320C793.3 310.8 842.5 307.5 870 315C897.5 322.5 937.5 347.5 945 365C952.5 382.5 923.3 409.2 915 420C906.7 430.8 895 430 895 430C895 430 847.5 400 830 390C812.5 380 798.3 381.7 790 370C781.7 358.3 766.7 329.2 780 320Z" fill="#ea9cab"/>
<path d="M630 340C653.3 315 749.2 300 780 310C810.8 320 806.3 368.3 815 400C823.7 431.7 829.8 471.7 832 500C834.2 528.3 833.3 550.8 828 570C822.7 589.2 816.3 610 800 615C783.7 620 750 612.5 730 600C710 587.5 695 563.3 680 540C665 516.7 648.3 493.3 640 460C631.7 426.7 606.7 365 630 340Z" fill="#ea9cab"/>
<path d="M450 420C455.8 405 478.3 382.5 500 370C521.7 357.5 561.7 346.7 580 345C598.3 343.3 620 345.8 610 360C600 374.2 544.2 413.3 520 430C495.8 446.7 476.7 461.7 465 460C453.3 458.3 444.2 435 450 420Z" fill="#ea9cab"/>
<path d="M470 520C475 500 496.7 465 520 440C543.3 415 586.7 380 610 370C633.3 360 658.3 363.3 660 380C661.7 396.7 641.7 437 620 470C598.3 503 551.7 563 530 578C508.3 593 500 569.7 490 560C480 550.3 465 540 470 520Z" fill="#ea9cab"/>
<path d="M490 325L560 320L610 300L545 275L550 262L590 265L580 225L640 225L650 185L675 195L700 145L712 160L705 230L830 185L840 200L790 260L780 290L700 320L620 345L520 348Z" fill="#dc5f77"/>
</g>
<!-- e_redflower2.svg -->
<g transform="translate(705 405) scale(0.13793)">
<path d="M459.4 9.4L453.5 19.5L445.9 32.8L436.9 48.8L427 66.6L416.5 85.7L405.8 105.2L395.4 124.5L385.7 142.9L376.4 160.5L367 178.2L357.6 196.1L348.1 214.4L338.7 233.1L329.4 252.3L320.3 272.2L311.4 292.7L302.8 313.9L294.4 335.7L286.2 358L278.1 380.7L270.3 403.6L262.5 426.7L254.8 449.8L247.1 472.9L240.7 497.1L234.3 522L228 547.3L221.8 572.6L215.8 597.5L210 621.5L204.5 644.3L199.3 665.4L194.5 684.8L190 702.8L185.7 719.7L181.6 735.9L177.7 751.5L174 766.8L170.3 782L166.7 797.6L163 813.9L159.2 830.9L155.4 848.1L151.8 864.9L148.6 880.6L145.7 894.7L143.5 906.6L142 915.7L144 916.3L147.3 907.7L151.4 896.2L156 882.6L161.2 867.4L166.6 851.2L172.2 834.5L177.8 818.1L183.3 802.4L188.7 787.6L194.2 773L199.8 758.4L205.5 743.4L211.4 727.8L217.5 711.3L223.9 693.7L230.7 674.6L237.7 653.9L245.1 631.5L252.8 607.9L260.7 583.6L268.7 559L276.7 534.4L284.9 510.3L292.9 487.1L299.6 463.8L306.4 440.5L313.1 417.3L320 394.3L326.9 371.7L334 349.6L341.2 328.1L348.6 307.3L356.2 287.3L364.2 267.8L372.3 248.7L380.6 230L389 211.5L397.5 193.3L406 175.2L414.3 157.1L423.1 138.5L432.5 118.9L442.2 99L451.8 79.6L460.8 61.4L468.9 45L475.7 31.1L480.6 20.6Z" fill="#a4b8aa"/>
<path d="M330 520C330 503.3 351.7 478.3 380 460C408.3 441.7 455 426.7 500 410C545 393.3 600 372 650 360C700 348 763.3 341.3 800 338C836.7 334.7 870 340 870 340C870 340 883 350 878 360C873 370 850.5 383.3 840 400C829.5 416.7 815 460 815 460C815 460 844.5 465.8 855 475C865.5 484.2 880.5 499.2 878 515C875.5 530.8 859.7 554.2 840 570C820.3 585.8 793.3 598.3 760 610C726.7 621.7 683.3 632.5 640 640C596.7 647.5 539.2 651.7 500 655C460.8 658.3 425 664.5 405 660C385 655.5 380 628 380 628C380 628 406.3 601 420 590C433.7 579 462 562 462 562C462 562 402 567 380 560C358 553 330 536.7 330 520Z" fill="#a4b8aa"/>
<path d="M510 60C513.3 55 526.7 60 540 70C553.3 80 577 101.7 590 120C603 138.3 618 180 618 180C618 180 576.3 153.3 560 140C543.7 126.7 528.3 113.3 520 100C511.7 86.7 506.7 65 510 60Z" fill="#e7939b"/>
<path d="M610 110C616.7 100 655 85 680 90C705 95 738.3 125 760 140C781.7 155 803.3 165 810 180C816.7 195 808.3 219.2 800 230C791.7 240.8 778.3 250 760 245C741.7 240 710 215.8 690 200C670 184.2 653.3 165 640 150C626.7 135 603.3 120 610 110Z" fill="#e7939b"/>
</g>
<g transform="translate(705 320) scale(0.13793)">
<path d="M235 190C234.2 165 239.2 129.2 250 110C260.8 90.8 284.2 78.3 300 75C315.8 71.7 334.2 72.5 345 90C355.8 107.5 360.8 151.7 365 180C369.2 208.3 382.5 240 370 260C357.5 280 309.2 300 290 300C270.8 300 264.2 278.3 255 260C245.8 241.7 235.8 215 235 190Z" fill="#e7939b"/>
<path d="M370 180C373.3 151.7 398.3 111.7 420 90C441.7 68.3 473.3 55 500 50C526.7 45 562 50 580 60C598 70 603.8 88.3 608 110C612.2 131.7 619.7 166.7 605 190C590.3 213.3 554.2 238.3 520 250C485.8 261.7 425 271.7 400 260C375 248.3 366.7 208.3 370 180Z" fill="#e7939b"/>
<path d="M610 195C630 168.3 648.3 153.3 680 140C711.7 126.7 770 116.7 800 115C830 113.3 848.7 119.2 860 130C871.3 140.8 873 160.8 868 180C863 199.2 844.7 226.7 830 245C815.3 263.3 810 275.8 780 290C750 304.2 686.7 328.3 650 330C613.3 331.7 566.7 322.5 560 300C553.3 277.5 590 221.7 610 195Z" fill="#e7939b"/>
<path d="M830 245C843.3 218.3 855 183.3 870 170C885 156.7 903.3 158.3 920 165C936.7 171.7 960.3 187.5 970 210C979.7 232.5 981.3 268.3 978 300C974.7 331.7 963 372.5 950 400C937 427.5 921.7 458.3 900 465C878.3 471.7 838.3 462.5 820 440C801.7 417.5 788.3 362.5 790 330C791.7 297.5 816.7 271.7 830 245Z" fill="#e7939b"/>
<path d="M900 465C921.7 440 941.7 424.2 960 410C978.3 395.8 995 380 1010 380C1025 380 1042.5 395 1050 410C1057.5 425 1063.3 446.7 1055 470C1046.7 493.3 1025.8 528.3 1000 550C974.2 571.7 928.3 598.3 900 600C871.7 601.7 830 582.5 830 560C830 537.5 878.3 490 900 465Z" fill="#e7939b"/>
<path d="M900 600C936.7 591.7 969.2 621.7 1000 630C1030.8 638.3 1068.7 636.7 1085 650C1101.3 663.3 1102.2 691.7 1098 710C1093.8 728.3 1084.7 747.5 1060 760C1035.3 772.5 985 785 950 785C915 785 878.3 777.5 850 760C821.7 742.5 771.7 706.7 780 680C788.3 653.3 863.3 608.3 900 600Z" fill="#e7939b"/>
<path d="M100 250C100 250 141.7 256.7 180 270C218.3 283.3 305 305 330 330C355 355 346.7 411.7 330 420C313.3 428.3 261.7 395 230 380C198.3 365 161.7 351.7 140 330C118.3 308.3 100 250 100 250Z" fill="#e7939b"/>
<path d="M140 390C140 390 216.7 400 250 410C283.3 420 323.3 428.3 340 450C356.7 471.7 360 528.3 350 540C340 551.7 306.7 531.7 280 520C253.3 508.3 213.3 491.7 190 470C166.7 448.3 140 390 140 390Z" fill="#e7939b"/>
<path d="M195 605C195 605 265.8 590.8 300 585C334.2 579.2 380 564.2 400 570C420 575.8 428.3 608.3 420 620C411.7 631.7 380 637 350 640C320 643 265.8 643.8 240 638C214.2 632.2 195 605 195 605Z" fill="#e7939b"/>
<path d="M480 330C526.7 286.7 636.7 285 700 300C763.3 315 835 363.3 860 420C885 476.7 886.7 595 850 640C813.3 685 711.7 703.3 640 690C568.3 676.7 446.7 620 420 560C393.3 500 433.3 373.3 480 330Z" fill="#e7939b"/>
<path d="M440 400C476.7 366.7 656.7 358.3 700 400C743.3 441.7 736.7 616.7 700 650C663.3 683.3 523.3 641.7 480 600C436.7 558.3 403.3 433.3 440 400Z" fill="#dd3d46"/>
<path d="M395 200C395 173.3 404.2 169.2 420 160C435.8 150.8 473.3 138.3 490 145C506.7 151.7 506.7 192.5 520 200C533.3 207.5 552.5 187.5 570 190C587.5 192.5 616.7 201.7 625 215C633.3 228.3 627.5 249.2 620 270C612.5 290.8 593.3 318.3 580 340C566.7 361.7 558.3 390 540 400C521.7 410 490 413.3 470 400C450 386.7 432.5 353.3 420 320C407.5 286.7 395 226.7 395 200Z" fill="#dd3d46"/>
<path d="M305 280C310.8 249.2 324.2 248.3 340 245C355.8 241.7 381.7 247.5 400 260C418.3 272.5 436.7 293.3 450 320C463.3 346.7 476.7 383.3 480 420C483.3 456.7 480 513.3 470 540C460 566.7 440 583.3 420 580C400 576.7 369.2 545 350 520C330.8 495 312.5 470 305 430C297.5 390 299.2 310.8 305 280Z" fill="#dd3d46"/>
<path d="M570 390C573.3 373.3 611.7 339.2 640 320C668.3 300.8 716.7 278.3 740 275C763.3 271.7 771.7 287.5 780 300C788.3 312.5 780.3 336.7 790 350C799.7 363.3 831.3 366.7 838 380C844.7 393.3 823.8 413.3 830 430C836.2 446.7 871.7 465 875 480C878.3 495 858.3 509.2 850 520C841.7 530.8 823 530 825 545C827 560 857 594.2 862 610C867 625.8 865.3 631.7 855 640C844.7 648.3 808.3 645 800 660C791.7 675 810 713.3 805 730C800 746.7 787.5 761.7 770 760C752.5 758.3 721.7 740 700 720C678.3 700 643.3 666.7 640 640C636.7 613.3 671.7 586.7 680 560C688.3 533.3 700 503.3 690 480C680 456.7 640 435 620 420C600 405 566.7 406.7 570 390Z" fill="#dd3d46"/>
<path d="M415 590C410 573.3 422.5 555 440 550C457.5 545 493.3 548.3 520 560C546.7 571.7 576.7 605 600 620C623.3 635 643.3 633.3 660 650C676.7 666.7 703.3 708.3 700 720C696.7 731.7 663.3 725 640 720C616.7 715 588.3 701.7 560 690C531.7 678.3 494.2 666.7 470 650C445.8 633.3 420 606.7 415 590Z" fill="#dd3d46"/>
<path d="M455 435C462.5 449.2 482.5 492.5 500 520C517.5 547.5 537.5 577.5 560 600C582.5 622.5 622.5 645.8 635 655" fill="none" stroke="#e7939b" stroke-width="10" stroke-linecap="round"/>
<path d="M510 415C521.7 406.7 541.7 399.2 560 400C578.3 400.8 611.7 406.7 620 420C628.3 433.3 605 469.2 610 480C615 490.8 638.3 480 650 485C661.7 490 678.3 497.5 680 510C681.7 522.5 660 545 660 560C660 575 681.7 588.3 680 600C678.3 611.7 665 630 650 630C635 630 605 615 590 600C575 585 570 558.3 560 540C550 521.7 540 496.7 530 490C520 483.3 506.7 506.7 500 500C493.3 493.3 488.3 464.2 490 450C491.7 435.8 498.3 423.3 510 415Z" fill="#a4b8aa"/>
<path d="M450 310L470 340L478 400L510 450L490 470L465 400Z" fill="#a4b8aa"/>
</g>
<!-- f_ygflower.svg -->
<g transform="translate(205 400) scale(0.13793)">
<path d="M809.9 234.9L815.6 243.7L823.2 255.3L832.1 269.1L842.1 284.5L852.7 300.8L863.5 317.6L874.1 334.2L884.1 350.1L893.9 365.6L903.9 381.4L913.9 397.4L924 413.6L934.1 430L943.9 446.4L953.6 462.9L962.9 479.5L972 496.5L981.1 513.9L990.1 531.7L999 549.5L1008.5 566.9L1017.8 584L1026.7 600.7L1035.2 616.8L1043.2 632.4L1051 648L1058.4 663.3L1065.5 678.4L1072.4 693.1L1079.1 707.2L1085.5 720.7L1091.8 733.4L1098 745.7L1104.1 757.7L1110.1 769.2L1115.9 780.1L1121.2 790L1126 798.7L1130.2 806L1133.6 811.6L1136.4 810.4L1134.6 804L1132.1 796L1129 786.6L1125.4 775.9L1121.4 764.4L1117.1 752.1L1112.7 739.4L1108.2 726.6L1103.7 713.3L1099 699.2L1094.1 684.4L1088.9 669L1083.4 653L1077.6 636.7L1071.4 620L1064.8 603.2L1057.9 586.1L1050.5 568.4L1042.8 550.2L1034.8 531.7L1025.6 513.6L1016.2 495.6L1006.7 477.8L997.1 460.5L987.3 443.4L977.2 426.5L967 409.8L956.6 393.2L946.2 377L935.9 361L925.8 345.3L915.9 329.9L905.6 314L894.7 297.4L883.7 280.6L872.9 264.3L862.7 249L853.6 235.3L845.9 223.8L840.1 215.1Z" fill="#a4b8aa"/>
<path d="M1225 10C1225 10 1205 100 1205 100C1205 100 1235.8 79.7 1260 75C1284.2 70.3 1328 69.5 1350 72C1372 74.5 1384.5 78.7 1392 90C1399.5 101.3 1398.7 111.7 1395 140C1391.3 168.3 1384.2 221.7 1370 260C1355.8 298.3 1331.7 335 1310 370C1288.3 405 1260.8 442 1240 470C1219.2 498 1203.3 534.7 1185 538C1166.7 541.3 1130 490 1130 490C1130 490 1116.7 505 1105 500C1093.3 495 1067.5 488.3 1060 460C1052.5 431.7 1056.7 368.3 1060 330C1063.3 291.7 1068.3 260 1080 230C1091.7 200 1113.3 173.3 1130 150C1146.7 126.7 1164.2 113.3 1180 90C1195.8 66.7 1225 10 1225 10Z" fill="#a4b8aa"/>
<path d="M635 490C628.3 471.7 640.8 474.2 660 470C679.2 465.8 718.3 460 750 465C781.7 470 816.7 484.2 850 500C883.3 515.8 925 540 950 560C975 580 990 600 1000 620C1010 640 1008.3 664 1010 680C1011.7 696 1005 701.7 1010 716C1015 730.3 1027.5 753.5 1040 766C1052.5 778.5 1078.3 784.8 1085 791C1091.7 797.2 1097.5 803.8 1080 803C1062.5 802.2 1010 795.5 980 786C950 776.5 930 764.3 900 746C870 727.7 833.3 703.7 800 676C766.7 648.3 727.5 611 700 580C672.5 549 641.7 508.3 635 490Z" fill="#a4b8aa"/>
<path d="M145 5C120 11.7 136.7 69.5 150 100C163.3 130.5 225 188 225 188C225 188 162.5 173.8 140 175C117.5 176.2 97.5 182.5 90 195C82.5 207.5 85 230.8 95 250C105 269.2 122.5 294.2 150 310C177.5 325.8 221.7 340 260 345C298.3 350 340 348.3 380 340C420 331.7 473.3 313.3 500 295C526.7 276.7 548.3 245.8 540 230C531.7 214.2 466.7 221.7 450 200C433.3 178.3 465 123.3 440 100C415 76.7 349.2 75.8 300 60C250.8 44.2 170 -1.7 145 5Z" fill="#d5dfae"/>
<path d="M520 290C530.8 260 530 238.3 560 220C590 201.7 674.2 176.7 700 180C725.8 183.3 715 213.3 715 240C715 266.7 710.8 308.3 700 340C689.2 371.7 670 408.7 650 430C630 451.3 605.8 462.2 580 468C554.2 473.8 509.2 476.3 495 465C480.8 453.7 490.8 429.2 495 400C499.2 370.8 509.2 320 520 290Z" fill="#d5dfae"/>
<path d="M715 190C725 172.5 769.2 148.3 800 120C830.8 91.7 875 31.7 900 20C925 8.3 937 36.7 950 50C963 63.3 978 81.7 978 100C978 118.3 966.3 143.3 950 160C933.7 176.7 900 188.3 880 200C860 211.7 846.7 222.5 830 230C813.3 237.5 795 245.8 780 245C765 244.2 750.8 234.2 740 225C729.2 215.8 705 207.5 715 190Z" fill="#d5dfae"/>
<path d="M255 30C278.3 17.5 334.2 0.8 440 -5C545.8 -10.8 818.3 -12.5 890 -5C961.7 2.5 885 24.2 870 40C855 55.8 813.3 76.7 800 90C786.7 103.3 806.7 108.3 790 120C773.3 131.7 728.3 151.7 700 160C671.7 168.3 646.7 163.3 620 170C593.3 176.7 565 185.8 540 200C515 214.2 485.8 250 470 255C454.2 260 450 245.8 445 230C440 214.2 450.8 180 440 160C429.2 140 403.3 125 380 110C356.7 95 320.8 83.3 300 70C279.2 56.7 231.7 42.5 255 30Z" fill="#b9c987"/>
</g>
<g transform="translate(205 315) scale(0.13793)">
<path d="M565 160C566.7 139.2 574.2 117.5 590 105C605.8 92.5 636.7 84.2 660 85C683.3 85.8 706.7 94.2 730 110C753.3 125.8 783.3 155 800 180C816.7 205 833.3 235 830 260C826.7 285 810 323.3 780 330C750 336.7 683.3 316.7 650 300C616.7 283.3 594.2 253.3 580 230C565.8 206.7 563.3 180.8 565 160Z" fill="#d5dfae"/>
<path d="M815 150C818.3 125.8 819.2 99.7 830 85C840.8 70.3 862.5 62 880 62C897.5 62 917.5 67 935 85C952.5 103 975 140.8 985 170C995 199.2 997.5 230 995 260C992.5 290 979.2 323.3 970 350C960.8 376.7 955 411.7 940 420C925 428.3 903.3 416.7 880 400C856.7 383.3 811.7 348.3 800 320C788.3 291.7 807.5 258.3 810 230C812.5 201.7 811.7 174.2 815 150Z" fill="#d5dfae"/>
<path d="M880 520C891.7 491.7 913.3 448.3 940 420C966.7 391.7 1013.3 365 1040 350C1066.7 335 1081.7 327.5 1100 330C1118.3 332.5 1140.8 348.3 1150 365C1159.2 381.7 1161.7 404.2 1155 430C1148.3 455.8 1132.5 493.3 1110 520C1087.5 546.7 1051.7 572.5 1020 590C988.3 607.5 945 625 920 625C895 625 876.7 607.5 870 590C863.3 572.5 868.3 548.3 880 520Z" fill="#d5dfae"/>
<path d="M225 400C225 400 300 430 300 430C300 430 290 370 290 370C290 370 330 355 330 355C330 355 298.3 285 310 270C321.7 255 373.3 261.7 400 265C426.7 268.3 453.3 267.5 470 290C486.7 312.5 488.3 365 500 400C511.7 435 556.7 480 540 500C523.3 520 441.7 518.3 400 520C358.3 521.7 319.2 530 290 510C260.8 490 225 400 225 400Z" fill="#d5dfae"/>
<path d="M145 620C146.7 598.3 154.2 582 165 570C175.8 558 190.8 543 210 548C229.2 553 248.3 574.7 280 600C311.7 625.3 366.7 668.3 400 700C433.3 731.7 513.3 775 480 790C446.7 805 254.2 805 200 790C145.8 775 164.2 728.3 155 700C145.8 671.7 143.3 641.7 145 620Z" fill="#d5dfae"/>
<path d="M800 700C823.3 675 873.3 643.3 900 640C926.7 636.7 947 663.3 960 680C973 696.7 981.3 721.7 978 740C974.7 758.3 976.3 781.7 940 790C903.7 798.3 783.3 805 760 790C736.7 775 776.7 725 800 700Z" fill="#d5dfae"/>
<path d="M520 300C586.7 268.3 736.7 286.7 800 330C863.3 373.3 900 495 900 560C900 625 866.7 693.3 800 720C733.3 746.7 566.7 753.3 500 720C433.3 686.7 396.7 590 400 520C403.3 450 453.3 331.7 520 300Z" fill="#d5dfae"/>
<path d="M485 250C485 250 529.2 242.5 550 240C570.8 237.5 595 243.3 610 235C625 226.7 640 190 640 190C640 190 700 179.7 720 188C740 196.3 752.5 216.3 760 240C767.5 263.7 766.7 300 765 330C763.3 360 760.8 391.7 750 420C739.2 448.3 725 483.3 700 500C675 516.7 630 530 600 520C570 510 538.3 470 520 440C501.7 410 495.8 371.7 490 340C484.2 308.3 485 250 485 250Z" fill="#b9c987"/>
<path d="M755 420C771.7 386.7 784.2 375 800 360C815.8 345 830 329.2 850 330C870 330.8 920 365 920 365C920 365 908.3 414.2 900 440C891.7 465.8 870.8 498.3 870 520C869.2 541.7 891.7 551.7 895 570C898.3 588.3 900.8 611.7 890 630C879.2 648.3 848.3 665 830 680C811.7 695 801.7 716.7 780 720C758.3 723.3 713.3 726.7 700 700C686.7 673.3 690.8 606.7 700 560C709.2 513.3 738.3 453.3 755 420Z" fill="#b9c987"/>
<path d="M255 650C246.7 631.7 285.8 616.7 290 600C294.2 583.3 276.7 567.5 280 550C283.3 532.5 290 506.3 310 495C330 483.7 368.3 482.8 400 482C431.7 481.2 473.3 483.7 500 490C526.7 496.3 546.7 501.7 560 520C573.3 538.3 583.3 570 580 600C576.7 630 563.3 676.7 540 700C516.7 723.3 473.3 738.3 440 740C406.7 741.7 370.8 725 340 710C309.2 695 263.3 668.3 255 650Z" fill="#b9c987"/>
<path d="M440 790C386.7 781.7 433.3 755 460 740C486.7 725 560 710 600 700C640 690 666.7 676.7 700 680C733.3 683.3 786.7 701.7 800 720C813.3 738.3 840 778.3 780 790C720 801.7 493.3 798.3 440 790Z" fill="#b9c987"/>
<path d="M520 480C560 443.3 680 460 720 480C760 500 773.3 560 760 600C746.7 640 686.7 703.3 640 720C593.3 736.7 500 740 480 700C460 660 480 516.7 520 480Z" fill="#b9c987"/>
<path d="M545 470L590 455L630 490L650 540L700 545L735 560L740 505L760 510L765 560L790 530L820 485L835 500L810 570L750 640L680 690L600 700L470 755L440 745L445 725L560 690L440 665L430 645L460 640L560 650L470 600L465 580L500 580L550 600L555 555L580 540L555 500Z" fill="#a4b8aa"/>
<ellipse cx="668" cy="655" rx="18" ry="9" transform="rotate(-40 668 655)" fill="#d5dfae"/>
</g>
<!-- g_sprig.svg -->
<g transform="translate(225 224) scale(0.08966)">
<path d="M426.9 215.1L439.6 226L456.8 240.6L477.2 258L499.7 277.2L523.2 297.4L546.3 317.6L568 336.7L587.2 354L604.5 369.7L621.3 384.5L637.2 398.5L652.3 412.2L666.7 425.9L680.2 439.9L693.1 454.6L705.3 470.4L717.6 487.2L729.2 505.5L740.3 525L751 545.3L761.3 565.8L771.4 586.1L781.3 605.8L791.2 624.2L801.2 642.2L811.3 660.6L821.3 678.9L830.9 696.4L839.9 712.8L848.1 727.3L855.1 739.4L860.6 748.7L863.4 747.3L859.6 737.2L854.5 724.2L848.2 708.8L841.1 691.6L833.3 673.1L825.1 653.9L816.9 634.6L808.8 615.8L800.9 596.8L793 576.5L784.8 555.4L776.2 533.7L767.1 511.9L757.3 490.4L746.5 469.4L734.7 449.6L721.3 431.8L707.3 415.4L692.7 400L677.7 385.3L662.2 370.9L646.2 356.5L629.8 341.7L612.8 326L593.6 308.3L571.8 288.7L548.6 268.2L525.3 247.8L502.8 228.3L482.6 210.7L465.6 195.9L453.1 184.9Z" fill="#a4b8aa"/>
<ellipse cx="303" cy="165" rx="150" ry="72" transform="rotate(10 303 165)" fill="#a4b8aa"/>
<ellipse cx="490" cy="92" rx="62" ry="105" transform="rotate(-5 490 92)" fill="#a4b8aa"/>
<ellipse cx="630" cy="165" rx="62" ry="118" transform="rotate(5 630 165)" fill="#a4b8aa"/>
<ellipse cx="755" cy="288" rx="75" ry="100" transform="rotate(35 755 288)" fill="#a4b8aa"/>
<ellipse cx="790" cy="395" rx="58" ry="75" transform="rotate(25 790 395)" fill="#a4b8aa"/>
<ellipse cx="378" cy="355" rx="150" ry="78" transform="rotate(-32 378 355)" fill="#a4b8aa"/>
<ellipse cx="540" cy="420" rx="70" ry="118" transform="rotate(30 540 420)" fill="#a4b8aa"/>
<ellipse cx="655" cy="510" rx="65" ry="105" transform="rotate(35 655 510)" fill="#a4b8aa"/>
</g>
<!-- h_ygcluster.svg -->
<g transform="translate(335 255) scale(0.13793)">
<path d="M306.2 165.8L308 173.7L310.8 184.1L314.3 196.4L318.4 210L323.1 224.4L328.1 239L333.4 253.1L338.9 266.3L347.4 277.8L356.8 289.6L366.7 301.4L376.7 312.8L386.3 323.4L395 332.8L402.6 340.5L408.4 346.2L411.6 343.8L407.9 336.5L402.5 327.1L395.9 316.2L388.6 304L380.9 291.3L373.5 278.3L366.7 265.6L361.1 253.7L353.8 242.8L346.4 230.5L339.1 217.4L332.1 204.3L325.5 191.8L319.5 180.5L314.2 171.1L309.8 164.2Z" fill="#a4b8aa"/>
<path d="M376.3 236L380.8 246.2L386.9 259.7L394.5 275.8L403 293.6L412.3 312.3L422 331.1L431.8 349.2L441.5 365.8L451.3 381.2L461.4 396.2L471.9 410.8L482.6 425.2L495 438.1L507.4 450.9L519.8 463.7L532.2 476.6L545.3 490.5L559.4 505.4L574 520.8L588.5 535.9L602.3 550.2L614.7 562.9L625.3 573.5L633.5 581.3L636.5 578.7L629.9 569.5L620.9 557.6L610 543.5L597.8 527.9L584.9 511.4L571.8 494.7L559.3 478.5L547.8 463.4L537 449L526.1 434.8L515.2 420.7L504.6 406.6L492.5 393.9L480.8 380.9L469.4 367.7L458.5 354.2L447.4 339.3L436.1 322.7L424.7 305.2L413.7 287.7L403.4 270.9L394.1 255.9L386.1 243.3L379.7 234Z" fill="#a4b8aa"/>
<path d="M476.2 308.9L479.6 317.3L484.4 328.4L490.2 341.7L496.7 356.3L503.6 371.5L510.5 386.6L517 401L522.9 413.8L529.9 425.1L537.1 436.6L544.4 448L551.4 458.9L558 468.9L564 477.9L569.2 485.3L573.3 491L576.7 489L574 482.6L570.1 474.4L565.4 464.7L560.1 453.9L554.4 442.3L548.5 430.3L542.6 418.1L537.1 406.2L529.9 394.3L522.1 380.7L513.9 366.3L505.6 351.7L497.8 337.8L490.6 325.3L484.5 314.8L479.8 307.1Z" fill="#a4b8aa"/>
<path d="M349.5 469.9L357 472.9L367.1 476.3L379.1 480.1L392.3 484.5L406.3 489.3L420.3 494.8L433.7 500.9L445.9 507.7L457.5 515.4L469.2 524.2L481 534L492.8 544.3L505.8 553.8L518.8 563.4L531.8 572.9L544.7 581.9L558 590.9L572.1 600.7L586.4 610.6L600.5 620.4L613.8 629.6L625.8 637.8L636 644.6L643.8 649.6L646.2 646.4L639.4 640.1L630.3 632L619.3 622.5L607 612L593.9 600.8L580.6 589.5L567.5 578.5L555.3 568.1L543.7 558L531.9 547.4L519.9 536.5L507.8 525.6L494.5 516.2L481.1 507.3L467.6 499.3L454.1 492.3L439.9 486.5L425 481.6L409.9 477.6L395.2 474.2L381.3 471.4L368.9 469.2L358.4 467.4L350.5 466.1Z" fill="#a4b8aa"/>
<path d="M453.9 463.7L459.9 468.8L468 475.1L477.7 482.4L488.6 490.5L500.1 499.3L511.8 508.5L523.3 518L534 527.5L546.1 536.5L559.5 547.1L573.4 558.6L587.3 570.3L600.6 581.7L612.6 591.9L622.8 600.4L630.6 606.5L633.4 603.5L626.9 596.1L618 586.3L607.3 574.7L595.3 561.9L582.6 548.7L569.8 535.6L557.5 523.4L546 512.5L533.6 504.1L520.7 495.9L507.7 488.1L494.9 480.8L483 474.2L472.2 468.5L463.1 463.8L456.1 460.3Z" fill="#a4b8aa"/>
<path d="M560 210.2L560.5 220.3L561 233.9L561.7 250L562.7 268L564.3 286.9L566.4 306.1L569.3 324.8L573.2 342L578.1 358.3L583.9 374.3L590.5 390.1L597.6 405.8L606.3 420.7L615.4 435.3L624.7 449.6L634 463.8L644.3 478.4L655.8 493.8L667.9 509.2L680.2 524.3L691.9 538.3L702.6 550.9L711.6 561.4L718.4 569.2L721.6 566.8L715.8 558.1L707.7 546.9L698.1 533.5L687.3 518.7L676.2 503L665.2 487L654.9 471.2L646 456.2L637.9 441.7L629.8 426.9L622 412L614.6 396.9L606.6 382.4L599.2 367.7L592.6 352.9L586.8 338L581.9 321.9L577.8 304.2L574.5 285.6L571.8 267L569.5 249.3L567.5 233.3L565.7 219.8L564 209.8Z" fill="#a4b8aa"/>
<path d="M593 200.2L593.5 208.7L594 220L594.7 233.5L595.7 248.6L597.1 264.5L598.9 280.7L601.2 296.6L604.2 311.5L607.9 325.8L612.2 340.2L617 354.7L622.3 369.2L628.9 383.1L635.7 396.7L642.6 410L649.7 422.8L657.4 435.8L666.1 449.1L675.3 462.3L684.5 475.1L693.4 487L701.4 497.6L708.2 506.4L713.3 513.1L716.7 510.9L712.3 503.6L706.3 494.2L699.1 483L691.1 470.6L682.8 457.4L674.6 443.8L666.9 430.2L660.3 417.2L654.3 404.2L648.3 390.8L642.6 377L637.1 363L631 349.3L625.4 335.6L620.3 321.9L615.8 308.5L612 294.4L608.7 279.1L606 263.3L603.7 247.7L601.7 232.9L600 219.5L598.4 208.2L597 199.8Z" fill="#a4b8aa"/>
<path d="M643 150.2L642.5 160.3L642 173.7L641.8 189.6L641.8 207.3L642.2 226.2L642.9 245.6L644.1 264.7L645.9 282.9L651.6 300.7L658.3 319.6L665.6 339L673.1 358.1L680.5 376.1L687.4 392.2L693.4 405.6L698.1 415.6L701.9 414.4L700.1 403.5L697.1 389L693.2 372L688.8 353.2L684.3 333.4L680.1 313.5L676.5 294.4L674.1 277.1L669.5 260.6L665.3 242.6L661.6 224.1L658.2 205.8L655.1 188.4L652.2 172.8L649.5 159.7L647 149.8Z" fill="#a4b8aa"/>
<path d="M650.1 150.6L652.2 161L655.5 174.7L659.5 191.1L664.1 209.2L668.8 228.2L673.3 247.3L677.4 265.6L680.7 282.2L685.2 298.1L689.6 315L693.7 332.2L697.7 349.1L701.3 365L704.6 379.3L707.5 391.3L710 400.3L714 399.7L713.3 390.3L712.3 378L710.8 363.4L709.1 347.1L707 329.8L704.7 312.1L702.1 294.5L699.3 277.8L694.1 261.1L688.1 243.1L681.7 224.4L675.2 205.8L668.8 188.2L662.9 172.4L657.9 159.2L653.9 149.4Z" fill="#a4b8aa"/>
<path d="M701 100.1L700.6 111.5L700 126.5L699.5 144.5L699.2 164.6L699.2 186L699.8 208.2L701.2 230.2L703.5 251.4L706.6 272.4L710.4 294L714.9 316.1L720 338.5L727.3 360.5L735 382.1L743.3 403.1L752 423.3L761.9 443.7L773.4 464.7L785.8 485.6L798.4 505.8L810.6 524.7L821.7 541.4L831.2 555.4L838.3 566L841.7 564L836 552.5L828 537.6L818.3 520L807.6 500.4L796.6 479.6L785.8 458.2L776.1 437L768 416.7L761.1 396.5L754.6 375.5L748.6 353.9L743.1 332.1L736.6 310.6L730.6 289.4L725.2 268.6L720.5 248.6L716.7 228.3L713.8 207L711.5 185.4L709.8 164.2L708.5 144.3L707.4 126.4L706.3 111.4L705 99.9Z" fill="#a4b8aa"/>
<path d="M720 -72L718.9 -64.8L717.8 -55.1L716.8 -43.6L715.8 -30.9L714.8 -17.5L713.9 -4.1L712.9 8.7L712 20.3L713.6 31.5L715.3 43.1L716.9 54.7L718.6 66L720.3 76.6L721.9 86.1L723.5 94L725 100.1L729 99.9L730 93.8L730.9 85.7L731.8 76.2L732.6 65.5L733.4 54.1L734.2 42.4L735.1 30.8L736 19.7L734.4 8.2L732.9 -4.5L731.3 -17.8L729.8 -31.1L728.3 -43.8L726.8 -55.3L725.4 -64.9L724 -72Z" fill="#a4b8aa"/>
<path d="M776 58.1L775.6 70.6L775.2 87.2L774.8 107.1L774.6 129.2L774.6 152.5L774.8 176.2L775.4 199.3L776.4 220.8L777.8 241.6L779.7 262.7L782 284L784.5 305.2L788.8 325.6L793.2 345.4L797.4 364.1L801.5 381.6L805.6 398.5L810 415.1L814.5 431.1L818.9 446.2L823.1 460.1L826.9 472.3L830.3 482.5L833.1 490.5L836.9 489.5L835.8 481.2L834.1 470.5L831.8 457.9L829.3 443.8L826.5 428.4L823.7 412.1L821 395.3L818.5 378.4L816.1 360.7L813.5 341.7L810.8 321.9L808.2 301.3L804.1 280.7L800.2 259.9L796.7 239.3L793.6 219.2L791 198.2L788.8 175.5L786.9 152L785.3 128.8L783.8 106.9L782.5 87.1L781.2 70.4L780 57.9Z" fill="#a4b8aa"/>
<path d="M828 174.8L826.5 184.1L824.7 196.1L822.6 210.4L820.5 226.5L818.4 243.9L816.6 262.3L815 281.2L814 300L815 320.4L816.6 343.6L818.4 368.2L820.5 393.1L822.6 417L824.7 438.6L826.5 456.7L828 470.1L832 469.9L832 456.4L831.7 438.2L831.1 416.5L830.5 392.5L829.9 367.6L829.6 343.1L829.5 320.1L830 300L829.5 281.6L829.6 263L829.9 244.7L830.5 227.3L831.1 211.1L831.7 196.7L832 184.6L832 175.2Z" fill="#a4b8aa"/>
</g>
<g transform="translate(335 180) scale(0.13793)">
<ellipse cx="322" cy="235" rx="45" ry="45" transform="rotate(0 322 235)" fill="#d5dfae"/>
<ellipse cx="317.2" cy="180.2" rx="50" ry="40.6" transform="rotate(-95 317.2 180.2)" fill="#d5dfae"/>
<ellipse cx="372.6" cy="213.5" rx="50" ry="40.6" transform="rotate(-23 372.6 213.5)" fill="#d5dfae"/>
<ellipse cx="358.1" cy="276.5" rx="50" ry="40.6" transform="rotate(49 358.1 276.5)" fill="#d5dfae"/>
<ellipse cx="293.7" cy="282.1" rx="50" ry="40.6" transform="rotate(121 293.7 282.1)" fill="#d5dfae"/>
<ellipse cx="268.4" cy="222.6" rx="50" ry="40.6" transform="rotate(193 268.4 222.6)" fill="#d5dfae"/>
<ellipse cx="322" cy="230" rx="18" ry="16" transform="rotate(0 322 230)" fill="#e88fa0"/>
<ellipse cx="508" cy="102" rx="45" ry="42" transform="rotate(0 508 102)" fill="#d5dfae"/>
<ellipse cx="597" cy="112" rx="48" ry="48" transform="rotate(0 597 112)" fill="#d5dfae"/>
<ellipse cx="528" cy="180" rx="38" ry="48" transform="rotate(20 528 180)" fill="#d5dfae"/>
<ellipse cx="550" cy="135" rx="40" ry="40" transform="rotate(0 550 135)" fill="#d5dfae"/>
<ellipse cx="557" cy="122" rx="6" ry="8" transform="rotate(0 557 122)" fill="#e88fa0"/>
<ellipse cx="850" cy="228" rx="67.5" ry="67.5" transform="rotate(0 850 228)" fill="#d5dfae"/>
<ellipse cx="842.8" cy="145.8" rx="75" ry="64.4" transform="rotate(-95 842.8 145.8)" fill="#d5dfae"/>
<ellipse cx="925.9" cy="195.8" rx="75" ry="64.4" transform="rotate(-23 925.9 195.8)" fill="#d5dfae"/>
<ellipse cx="904.1" cy="290.3" rx="75" ry="64.4" transform="rotate(49 904.1 290.3)" fill="#d5dfae"/>
<ellipse cx="807.5" cy="298.7" rx="75" ry="64.4" transform="rotate(121 807.5 298.7)" fill="#d5dfae"/>
<ellipse cx="769.6" cy="209.4" rx="75" ry="64.4" transform="rotate(193 769.6 209.4)" fill="#d5dfae"/>
<ellipse cx="852" cy="212" rx="18" ry="36" transform="rotate(-25 852 212)" fill="#e88fa0"/>
<ellipse cx="612" cy="290" rx="32" ry="58" transform="rotate(5 612 290)" fill="#d5dfae"/>
<ellipse cx="520" cy="355" rx="62" ry="42" transform="rotate(-25 520 355)" fill="#d5dfae"/>
<ellipse cx="590" cy="415" rx="40" ry="65" transform="rotate(10 590 415)" fill="#d5dfae"/>
<ellipse cx="668" cy="395" rx="42" ry="70" transform="rotate(-35 668 395)" fill="#d5dfae"/>
<ellipse cx="596" cy="352" rx="50" ry="45" transform="rotate(0 596 352)" fill="#d5dfae"/>
<ellipse cx="595" cy="337" rx="12" ry="9" transform="rotate(0 595 337)" fill="#e88fa0"/>
<ellipse cx="222" cy="548" rx="67.5" ry="67.5" transform="rotate(0 222 548)" fill="#d5dfae"/>
<ellipse cx="193.8" cy="470.5" rx="75" ry="64.4" transform="rotate(-110 193.8 470.5)" fill="#d5dfae"/>
<ellipse cx="287" cy="497.2" rx="75" ry="64.4" transform="rotate(-38 287 497.2)" fill="#d5dfae"/>
<ellipse cx="290.4" cy="594.1" rx="75" ry="64.4" transform="rotate(34 290.4 594.1)" fill="#d5dfae"/>
<ellipse cx="199.3" cy="627.3" rx="75" ry="64.4" transform="rotate(106 199.3 627.3)" fill="#d5dfae"/>
<ellipse cx="139.6" cy="550.9" rx="75" ry="64.4" transform="rotate(178 139.6 550.9)" fill="#d5dfae"/>
<ellipse cx="232" cy="550" rx="36" ry="20" transform="rotate(10 232 550)" fill="#e88fa0"/>
<ellipse cx="490" cy="535" rx="62" ry="55" transform="rotate(20 490 535)" fill="#d5dfae"/>
<ellipse cx="590" cy="572" rx="58" ry="52" transform="rotate(-20 590 572)" fill="#d5dfae"/>
<ellipse cx="503" cy="655" rx="76" ry="72" transform="rotate(0 503 655)" fill="#d5dfae"/>
<ellipse cx="535" cy="590" rx="50" ry="40" transform="rotate(0 535 590)" fill="#d5dfae"/>
<ellipse cx="535" cy="610" rx="20" ry="6" transform="rotate(15 535 610)" fill="#e88fa0"/>
<ellipse cx="903" cy="508" rx="47.2" ry="47.2" transform="rotate(0 903 508)" fill="#d5dfae"/>
<ellipse cx="893" cy="451.1" rx="52.5" ry="42.6" transform="rotate(-100 893 451.1)" fill="#d5dfae"/>
<ellipse cx="954" cy="480.9" rx="52.5" ry="42.6" transform="rotate(-28 954 480.9)" fill="#d5dfae"/>
<ellipse cx="944.5" cy="548.1" rx="52.5" ry="42.6" transform="rotate(44 944.5 548.1)" fill="#d5dfae"/>
<ellipse cx="877.7" cy="559.9" rx="52.5" ry="42.6" transform="rotate(116 877.7 559.9)" fill="#d5dfae"/>
<ellipse cx="845.8" cy="500" rx="52.5" ry="42.6" transform="rotate(188 845.8 500)" fill="#d5dfae"/>
<ellipse cx="907" cy="508" rx="20" ry="18" transform="rotate(0 907 508)" fill="#e88fa0"/>
</g>
<!-- i_hearts.svg -->
<g transform="translate(665 236) scale(0.13793)">
<path d="M360 100C365.8 83 380.8 62.2 390 58C399.2 53.8 409.2 63.8 415 75C420.8 86.2 425 125 425 125C425 125 456.2 98.3 465 95C473.8 91.7 483.8 94.2 478 105C472.2 115.8 448.8 140.5 430 160C411.2 179.5 365 222 365 222C365 222 355.8 180.3 355 160C354.2 139.7 354.2 117 360 100Z" fill="#d5dfae"/>
<path d="M565 190C565 190 580.8 122 590 100C599.2 78 610.8 62.2 620 58C629.2 53.8 641.7 66.3 645 75C648.3 83.7 640 110 640 110C640 110 666.3 116.7 668 125C669.7 133.3 661.3 149.2 650 160C638.7 170.8 614.2 185 600 190C585.8 195 565 190 565 190Z" fill="#d5dfae"/>
<path d="M198 280C196.3 264.7 206.3 258 215 258C223.7 258 240.8 271.3 250 280C259.2 288.7 270 310 270 310C270 310 284.2 257.5 290 250C295.8 242.5 305 250 305 265C305 280 295.5 314.2 290 340C284.5 365.8 272 420 272 420C272 420 237.3 373.3 225 350C212.7 326.7 199.7 295.3 198 280Z" fill="#d5dfae"/>
<path d="M400 320C399.2 301.7 401.7 275 410 260C418.3 245 440 231.7 450 230C460 228.3 470 250 470 250C470 250 498 240.8 505 245C512 249.2 517.8 260.8 512 275C506.2 289.2 482 313.3 470 330C458 346.7 449.2 368.3 440 375C430.8 381.7 421.7 379.2 415 370C408.3 360.8 400.8 338.3 400 320Z" fill="#d5dfae"/>
<path d="M590 392C590 392 612.5 313.7 625 290C637.5 266.3 654.5 254.2 665 250C675.5 245.8 685.5 253.3 688 265C690.5 276.7 680 320 680 320C680 320 725.8 310.3 735 312C744.2 313.7 744.2 322.8 735 330C725.8 337.2 704.2 344.7 680 355C655.8 365.3 590 392 590 392Z" fill="#d5dfae"/>
<path d="M128 470C125.5 457.5 140.5 455 150 455C159.5 455 185 470 185 470C185 470 201.7 454.7 210 458C218.3 461.3 230.8 470.5 235 490C239.2 509.5 239.2 560.8 235 575C230.8 589.2 221.7 582.5 210 575C198.3 567.5 178.7 547.5 165 530C151.3 512.5 130.5 482.5 128 470Z" fill="#d5dfae"/>
<path d="M295 450C297.5 426.7 310.8 401.7 320 400C329.2 398.3 343.3 426.7 350 440C356.7 453.3 360 480 360 480C360 480 396.3 447.5 405 445C413.7 442.5 417.8 450.8 412 465C406.2 479.2 382.8 513.3 370 530C357.2 546.7 345.8 563.3 335 565C324.2 566.7 311.7 559.2 305 540C298.3 520.8 292.5 473.3 295 450Z" fill="#d5dfae"/>
<path d="M440 545C440 545 469.2 461.2 480 440C490.8 418.8 497.5 416.3 505 418C512.5 419.7 521.2 438 525 450C528.8 462 528 490 528 490C528 490 586.3 474.7 600 478C613.7 481.3 620 500.5 610 510C600 519.5 560 528.3 540 535C520 541.7 506.7 548.3 490 550C473.3 551.7 440 545 440 545Z" fill="#d5dfae"/>
<path d="M305 690C304.2 675 315 650 315 650C315 650 315.8 672.5 330 660C344.2 647.5 385 586.7 400 575C415 563.3 416.7 577.5 420 590C423.3 602.5 425 628.3 420 650C415 671.7 402.5 700.8 390 720C377.5 739.2 356.7 761.7 345 765C333.3 768.3 326.7 752.5 320 740C313.3 727.5 305.8 705 305 690Z" fill="#d5dfae"/>
</g>
</g>
<g id="pat"><rect x="-170" y="-44" width="1450" height="860" fill="#fbfaf5"/><use href="#cell" x="-1066.95" y="-416.50"/><use href="#cell" x="-355.65" y="-416.50"/><use href="#cell" x="355.65" y="-416.50"/><use href="#cell" x="1066.95" y="-416.50"/><use href="#cell" x="-711.30" y="0.00"/><use href="#cell" x="0.00" y="0.00"/><use href="#cell" x="711.30" y="0.00"/><use href="#cell" x="-1066.95" y="416.50"/><use href="#cell" x="-355.65" y="416.50"/><use href="#cell" x="355.65" y="416.50"/><use href="#cell" x="1066.95" y="416.50"/></g></defs><use href="#pat"/></svg>
<div class="a" style="left:1059.7px;top:107.6px;width:4px;height:543.4px;background:#7f7f7f;border-radius:2px"></div>
<div class="a" style="left:167px;top:717px;width:749px;height:4.3px;background:#7f7f7f;border-radius:2.2px"></div>

<!-- status bar -->
<div class="box" id="bx" style="left:23.6px;top:725.4px;width:55px;height:10.4px;text-align:left;padding:0.9px 0 0 1.2px;font-size:7.9px">X:&nbsp; 253.66mm</div>
<div class="box" id="by" style="left:78.2px;top:725.4px;width:52.4px;height:10.4px;text-align:left;padding:0.9px 0 0 1.8px;font-size:7.9px">Y:&nbsp; 167.64mm</div>
<div class="box" id="bsz" style="left:705.2px;top:725.4px;width:164.6px;height:10.4px;padding-top:0.9px;font-size:7.9px">399.96mm x 234.19mm (300ppi)</div>
<div class="box" id="bidx" style="left:874.4px;top:725.4px;width:84.8px;height:10.4px;padding-top:0.6px;font-size:7.75px">インデックスカラー</div>
<div class="box" id="brep" style="left:964.2px;top:725.4px;width:56.2px;height:10.4px;padding-top:0.6px;font-size:7.75px;background:#333;border-color:#333;color:#fff">リピートオン</div>
<div class="box" id="bzoom" style="left:1026px;top:725.4px;width:40.6px;height:10.4px;padding-top:0.9px;font-size:7.9px">25.00%</div>

<!-- thumbnail strip -->
<div class="a" style="left:23.4px;top:737.4px;width:1043.4px;height:42.4px;background:#333"></div>
<div class="a" style="left:23.4px;top:780.6px;width:1043.4px;height:7.4px;background:#f4f4f4;border-top:1px solid #e2e2e2"></div>
<svg class="a" style="left:24px;top:736px" width="100" height="46" viewBox="0 0 1450 667">
  <rect x="103" y="130" width="420" height="248" fill="#fdf9ee"/>
  <g>
    <circle cx="340" cy="198" r="42" fill="#f6a33a"/><circle cx="340" cy="200" r="14" fill="#b5903c"/>
    <circle cx="458" cy="256" r="34" fill="#f6a33a"/><circle cx="458" cy="258" r="11" fill="#b5903c"/>
    <circle cx="182" cy="266" r="34" fill="#6cc0cf"/><circle cx="182" cy="268" r="11" fill="#4d9aa8"/>
    <circle cx="250" cy="186" r="20" fill="#a9dde0"/><circle cx="420" cy="206" r="13" fill="#a9dde0"/>
    <circle cx="282" cy="318" r="26" fill="#fbc3ac"/><circle cx="386" cy="264" r="20" fill="#f9a98e"/>
    <circle cx="178" cy="330" r="12" fill="#f9c36c"/><circle cx="240" cy="240" r="9" fill="#f9dca0"/>
    <ellipse cx="222" cy="300" rx="26" ry="9" transform="rotate(-40 222 300)" fill="#a9b86a"/>
    <ellipse cx="318" cy="262" rx="24" ry="9" transform="rotate(50 318 262)" fill="#a9b86a"/>
    <ellipse cx="360" cy="312" rx="22" ry="8" transform="rotate(60 360 312)" fill="#a9b86a"/>
    <ellipse cx="462" cy="318" rx="20" ry="9" transform="rotate(10 462 318)" fill="#a9b86a"/>
    <ellipse cx="410" cy="330" rx="14" ry="6" transform="rotate(80 410 330)" fill="#c3cf8c"/>
  </g>
  <path d="M130 55H198L228 86V180H130Z" fill="#e6289a"/>
  <circle cx="182" cy="104" r="15" fill="none" stroke="#fff" stroke-width="9"/><path d="M160 152H200" stroke="#fff" stroke-width="8"/>
  <path d="M760 55H828L858 86V180H760Z" fill="#e6289a"/>
  <circle cx="812" cy="104" r="15" fill="none" stroke="#fff" stroke-width="9"/><path d="M790 152H830" stroke="#fff" stroke-width="8"/>
</svg>
<svg class="a" style="left:74.7px;top:745px" width="29.3" height="17.1" viewBox="198 166 714 417" preserveAspectRatio="none"><use href="#pat"/></svg>
<svg class="a" style="left:74.7px;top:739.6px" width="8" height="9" viewBox="735 52 116 130"><path d="M760 55H828L858 86V180H760Z" fill="#e6289a"/><circle cx="812" cy="104" r="15" fill="none" stroke="#fff" stroke-width="9"/><path d="M790 152H830" stroke="#fff" stroke-width="8"/></svg>

<div class="a" style="left:68px;top:738.8px;width:42.2px;height:40.2px;border:0.8px solid #f2f2f2;border-radius:4.5px"></div>
<div class="t" style="left:27.1px;top:771.6px;font-size:6.4px;color:#fff">* AdobeSto...</div>
<div class="t" style="left:69px;top:771.6px;font-size:6.4px;color:#fff;width:40px;overflow:hidden">AdobeStock...</div>
<!-- navigator + layers -->
<div class="vl" style="left:1069.6px;top:40px;height:748px"></div>
<div class="hl" style="left:1073.2px;top:54px;width:149px"></div>
<div class="tab" id="tabnav" style="left:1073.2px;top:39.4px;width:61.6px;height:15.6px;padding-top:4px;font-size:7.75px">ナビゲーター</div>
<div class="a" style="left:1074px;top:57.6px;width:148px;height:219.4px;background:#999"></div>
<div class="a" style="left:1074px;top:122.7px;width:148px;height:88.3px;background:#555"></div>
<svg class="a" style="left:1074px;top:123.5px" width="148" height="86.7" viewBox="-167 -40 1422.6 833" preserveAspectRatio="none"><use href="#pat"/></svg>
<div class="a" style="left:1093.2px;top:131.2px;width:109.6px;height:71.8px;border:1.1px solid #3f7fd2"></div>
<div class="a" style="left:1094.3px;top:282.9px;width:64.8px;height:1px;background:#cdcdcd"></div>
<div class="a" style="left:1094.3px;top:282.7px;width:29px;height:1.3px;background:#3b82e0"></div>
<div class="a" style="left:1119.5px;top:279.7px;width:7.4px;height:7.4px;border-radius:50%;background:#3b82e0"></div>
<div class="t" style="left:1164.8px;top:279.4px;font-size:8.3px">25%</div>
<div class="hl" style="left:1073.2px;top:291.8px;width:149px"></div>
<div class="hl" style="left:1073.2px;top:310.4px;width:149px"></div>
<div class="tab" id="tablay" style="left:1073.2px;top:295.8px;width:45.8px;height:15.6px;padding-top:4px;font-size:7.75px">レイヤー</div>
<div class="num" style="left:1074.7px;top:314px;width:42.6px;height:13.2px"></div>
<div class="t" style="left:1078.6px;top:316.6px;font-size:7.5px">通常</div>
<svg class="a" style="left:1107px;top:317px" width="8" height="7" viewBox="0 0 8 7"><path d="M1.2 2.2L4 4.9L6.8 2.2" fill="none" stroke="#555" stroke-width="0.8"/></svg>
<div class="a" style="left:1125px;top:319.8px;width:53px;height:1.3px;background:#3b82e0"></div>
<div class="a" style="left:1173.6px;top:316.8px;width:7.4px;height:7.4px;border-radius:50%;background:#3b82e0"></div>
<div class="num" style="left:1185.4px;top:314px;width:35.2px;height:13.4px"></div>
<div class="a" style="left:1208.2px;top:314.6px;width:1px;height:12.2px;background:#e2e2e2"></div>
<div class="t" style="left:1191.2px;top:316.6px;font-size:8.2px">100</div>
<svg class="a" style="left:1210.5px;top:315px" width="8" height="12" viewBox="0 0 8 12"><path d="M1.7 4.6L4 2.3L6.3 4.6M1.7 7.4L4 9.7L6.3 7.4" fill="none" stroke="#666" stroke-width="0.8"/></svg>
<div class="a" style="left:1074px;top:330.2px;width:148px;height:11.9px;background:#b4d6fd"></div>
<div class="a" style="left:1074px;top:342px;width:148px;height:431px;background:#999"></div>
<svg class="a" style="left:1074px;top:330px" width="148" height="12" viewBox="0 0 148 12">
  <g fill="none" stroke="#111" stroke-width="1.2"><ellipse cx="6" cy="6.6" rx="3.2" ry="2.5"/><path d="M2.6 3.6l1 1.2M6 2.6v1.4M9.4 3.6l-1 1.2" stroke-width="0.9"/></g>
  <rect x="12.6" y="1.8" width="7.6" height="6.4" fill="#111"/><rect x="15.2" y="3.2" width="2.4" height="3.4" fill="#ddd"/>
  <path d="M12.6 9.6h1.6M15.6 9.6h1.6M18.6 9.6h1.6" stroke="#111" stroke-width="1.3"/>
  <path d="M22.2 2v-0.6h2M28.4 1.4h1.6v2M30 8v2h-2M24.2 10h-2v-2" fill="none" stroke="#333" stroke-width="0.7"/>
  <path d="M23.6 9.6l0.6-2.2l3.8-3.8l1.6 1.6l-3.8 3.8z" fill="#111"/>
  <path d="M140.8 5.8h6v3.6h-6z" fill="#111"/><path d="M142.3 5.8v-1.1a1.5 1.5 0 0 1 3 0v1.1" fill="none" stroke="#111" stroke-width="0.9"/>
</svg>
<div class="t" style="left:1105.8px;top:332.4px;font-size:7.2px;color:#111">背景</div>
<svg class="a" style="left:1074px;top:775px" width="90" height="12" viewBox="0 0 90 12" fill="none" stroke="#222" stroke-width="1">
  <path d="M4.4 5.9h6.4M7.6 2.7v6.4M17.6 5.9h6.6"/>
  <path d="M31.4 7.4a2.9 2.9 0 0 1 5.8 0z" fill="#222" stroke="none"/>
  <path d="M44.8 5.9h5.4v3.3h-5.4z" fill="#222" stroke="none"/><path d="M46 5.9v-1a1.5 1.5 0 0 1 3 0v1" fill="none" stroke-width="0.8"/>
  <path d="M60.6 3a1.5 1.5 0 1 0 0.1 0zM60.6 6a1.7 1.7 0 1 0 0.1 0z" stroke-width="0.7"/>
  <path d="M70.8 4.6h6.2l-3.1 3.2z" fill="#222" stroke="none"/>
</svg>
<!-- right panel -->
<div class="vl" style="left:1225px;top:40px;height:748px"></div>
<div class="hl" style="left:1228.2px;top:54px;width:219.4px"></div>
<div class="tab" style="left:1228.2px;top:39.4px;width:53.8px;height:15.6px;padding-top:4px;font-size:7.75px">色相・彩度</div>
<div class="tab2" style="left:1282.3px;top:39.4px;width:52.8px;height:14.6px;padding-top:4px;font-size:7.75px">スウォッチ</div>
<div class="tab2" style="left:1335.8px;top:39.4px;width:37.6px;height:14.6px;padding-top:4px;font-size:7.75px">近似色</div>
<div class="a" style="left:1230.3px;top:88.9px;width:95.6px;height:95.6px;border-radius:50%;background:radial-gradient(circle closest-side,#fff 0%,rgba(255,255,255,0.9) 8%,rgba(255,255,255,0) 76%),conic-gradient(from 90deg,#ff3326,#ff3090 8%,#ff40ff 17%,#9a30ff 26%,#0a0aff 34%,#2a8cff 43%,#6ff8ff 50%,#66f5a8 55%,#6cf540 61%,#74f540 71%,#c0fa44 78%,#fffb4a 83%,#ffa030 92%,#ff3326)"></div>
<svg class="a" style="left:1273px;top:131px" width="11" height="11" viewBox="0 0 11 11"><circle cx="5.4" cy="5.2" r="2.3" fill="#fff" stroke="#333" stroke-width="0.8"/></svg>
<div class="a" style="left:1337.4px;top:92.8px;width:91px;height:90.8px;background:linear-gradient(to bottom,rgba(30,30,28,0) 0%,rgba(40,40,38,0.5) 55%,rgba(52,52,50,0.97) 100%),linear-gradient(to right,#fff,#fbd234)"></div>
<div class="a" style="left:1339.3px;top:93.3px;width:4.8px;height:4.8px;background:#fff;border:0.8px solid #333"></div>
<svg class="a" style="left:1428px;top:92px" width="20" height="9" viewBox="0 0 20 9"><path d="M1.2 4.5L4.4 1.4H16.4A1.5 1.5 0 0 1 17.9 2.9V6.1A1.5 1.5 0 0 1 16.4 7.6H4.4Z" fill="#333"/><text x="11" y="6.7" font-family="Liberation Sans,sans-serif" font-weight="bold" font-size="6.2" fill="#fff" text-anchor="middle">99</text></svg>
<div class="lbl" style="left:1271px;top:187.2px;width:14px;height:6px">49</div>
<div class="lbl" style="left:1335px;top:187.2px;width:13.8px;height:6px">2</div>
<svg class="a" style="left:1339px;top:184px" width="6" height="4" viewBox="0 0 6 4"><path d="M2.6 0.4L4.4 3.6H0.8Z" fill="#333"/></svg>

<div class="hl" style="left:1228.2px;top:229.8px;width:219.4px"></div>
<div class="hl" style="left:1228.2px;top:248.3px;width:219.4px"></div>
<div class="tab" style="left:1228.2px;top:234px;width:38.2px;height:15.4px;padding-top:3.8px;font-size:7.75px">カラー</div>
<div class="a" style="left:1229.2px;top:252px;width:14.7px;height:6.8px;border:0.6px solid #8a8a8a;font-size:5.6px;line-height:5.6px;text-align:center;color:#333;border-radius:1px">RGB</div>
<div class="a" style="left:1243.6px;top:252px;width:14.7px;height:6.8px;border:0.6px solid #8a8a8a;font-size:5.6px;line-height:5.6px;text-align:center;color:#333;border-radius:1px">HSB</div>
<div class="a" style="left:1258px;top:252px;width:14.9px;height:6.8px;border:0.6px solid #333;background:#333;font-size:5.6px;line-height:5.6px;text-align:center;color:#fff;font-weight:bold;border-radius:1px">CMY</div>
<div class="a" style="left:1245.4px;top:274.9px;width:24.2px;height:24.2px;background:#fbfaf4;border:1px solid #dadada;border-radius:3.5px"></div>
<div class="a" style="left:1231.9px;top:261.4px;width:25px;height:24.8px;background:#fbfaf4;border:1.1px solid #2a2a2a;border-radius:3.8px"></div>
<div class="a" style="left:1233.5px;top:288.8px;width:8.5px;height:8.4px;background:#fcf7ea;border:0.8px solid #9a9a9a"></div>
<svg class="a" style="left:1258.6px;top:263.4px" width="10" height="10" viewBox="0 0 10 10"><path d="M2.6 2.6C5 2 7 3.6 7 6.2" fill="none" stroke="#111" stroke-width="1.4"/><path d="M1 3.5L3.3 0.9L3.8 4Z M5.2 5.6L8.8 5.6L7 8.6Z" fill="#111"/></svg>
<div class="t" style="left:1278px;top:255.8px;font-size:8.3px">C</div>
<div class="t" style="left:1277.6px;top:272px;font-size:8.3px">M</div>
<div class="t" style="left:1278px;top:288.2px;font-size:8.3px">Y</div>
<div class="a" style="left:1288.2px;top:254.7px;width:116.6px;height:3.6px;border-radius:1px;background:linear-gradient(to right,#fff,#a8f4f2 40%,#6ff0ee)"></div>
<div class="a" style="left:1288.2px;top:270.9px;width:116.6px;height:3.6px;border-radius:1px;background:linear-gradient(to right,#fff,#fa90f2 40%,#f63cf0)"></div>
<div class="a" style="left:1288.2px;top:287.2px;width:116.6px;height:3.6px;border-radius:1px;background:linear-gradient(to right,#fff,#faf890 40%,#f6f43a)"></div>
<svg class="a" style="left:1286px;top:258px" width="12" height="42" viewBox="0 0 12 42"><path d="M4.1 1L7 6.2H1.2ZM4.9 17.2L7.8 22.4H2ZM7 33.5L9.9 38.7H4.1Z" fill="#111"/></svg>
<div class="num" style="left:1410.4px;top:253.1px;width:35.8px;height:13.2px"></div>
<div class="num" style="left:1410.4px;top:269.4px;width:35.8px;height:13.2px"></div>
<div class="num" style="left:1410.4px;top:285.7px;width:35.8px;height:13.2px"></div>
<div class="a" style="left:1433.2px;top:253.6px;width:1px;height:45px;background:linear-gradient(#e2e2e2 0 12.2px,transparent 12.2px 16.3px,#e2e2e2 16.3px 28.5px,transparent 28.5px 32.6px,#e2e2e2 32.6px)"></div>
<div class="t" style="left:1410px;top:255.6px;width:18.6px;text-align:right;font-size:8.2px">4</div>
<div class="t" style="left:1410px;top:271.9px;width:18.6px;text-align:right;font-size:8.2px">5</div>
<div class="t" style="left:1410px;top:288.2px;width:18.6px;text-align:right;font-size:8.2px">10</div>
<svg class="a" style="left:1435.6px;top:253px" width="8" height="46" viewBox="0 0 8 46" fill="none" stroke="#666" stroke-width="0.8"><path d="M1.7 5.7L4 3.4L6.3 5.7M1.7 8.3L4 10.6L6.3 8.3M1.7 22L4 19.7L6.3 22M1.7 24.6L4 26.9L6.3 24.6M1.7 38.3L4 36L6.3 38.3M1.7 40.9L4 43.2L6.3 40.9"/></svg>
<div class="a" style="left:1229px;top:303.4px;width:12.8px;height:10.8px;background:#444;color:#fff;font-size:7.4px;line-height:10.8px;text-align:center">8</div>
<div class="a" style="left:1245.4px;top:303.9px;width:195.2px;height:10.1px;background:linear-gradient(to bottom,rgba(0,0,0,0) 30%,rgba(0,0,0,1) 100%),linear-gradient(to right,#f00,#ff0 17%,#0f0 33%,#0ff 50%,#00f 67%,#f0f 83%,#f00)"></div>
<div class="a" style="left:1440.5px;top:303.9px;width:6.8px;height:5px;background:#fff"></div>
<div class="a" style="left:1440.5px;top:308.9px;width:6.8px;height:5.1px;background:#000"></div>
<div class="a" style="left:1229px;top:317.7px;width:218.3px;height:76.4px;background:#333"></div>
<div class="sw" style="left:1230.4px;background:#fbfaf4;box-shadow:0 0 0 0.9px #e4e4e4">1</div>
<div class="sw" style="left:1256.8px;background:#d5dfae">2</div>
<div class="sw" style="left:1283.2px;background:#b9c986">3</div>
<div class="sw" style="left:1309.8px;background:#a3b8a9">4</div>
<div class="sw" style="left:1336.3px;background:#e89098">5</div>
<div class="sw" style="left:1362.8px;background:#dc3b45;color:#fff">6</div>
<div class="sw" style="left:1389.3px;background:#ea9bab">7</div>
<div class="sw" style="left:1415.9px;background:#dc5f75">8</div>
<svg class="a" style="left:1229px;top:396px" width="135" height="12" viewBox="0 0 135 12" fill="none" stroke="#222" stroke-width="1">
  <path d="M3.7 5.6h6.2M6.8 2.5v6.2M16.7 5.6h6.6"/>
  <path d="M30 6.2l1.8 2l4.2-5.4" stroke-width="0.8"/>
  <path d="M43 8.6l0.6-2l4-4l1.5 1.5l-4 4z" fill="#222" stroke="none"/>
  <path d="M58 5.6h3.4" stroke-width="0.9"/><path d="M56.4 5.6l2-1.7v3.4zM62.8 5.6l-2-1.7v3.4z" fill="#222" stroke="none"/>
  <circle cx="72.8" cy="5.6" r="2.6" stroke-width="1.1"/><path d="M71 3.8l3.6 3.6" stroke-width="1"/>
  <path d="M111.2 2.4v6.4M108.4 4l5.6 3.2M114 4l-5.6 3.2" stroke-width="0.8"/>
  <path d="M121.8 4.2h6l-3 3.2z" fill="#222" stroke="none"/>
</svg>
<div class="t" style="left:1310.2px;top:397.8px;font-size:7.6px">クリア</div>
<div class="hl" style="left:1228.2px;top:409.4px;width:219.4px"></div>
<div class="hl" style="left:1228.2px;top:428.2px;width:219.4px"></div>
<div class="tab" style="left:1228.2px;top:413.8px;width:30.4px;height:15.4px;padding-top:3.8px;font-size:7.75px">配色</div>
<div class="a" style="left:1229px;top:432.1px;width:218.3px;height:340.8px;background:#333"></div>
<div class="ms" style="left:1231.9px;top:434.8px;background:#fdf8ec"></div>
<div class="ms" style="left:1242.7px;top:434.8px;background:#a6e0e0"></div>
<div class="ms" style="left:1253.6px;top:434.8px;background:#7cc4c8"></div>
<div class="ms" style="left:1264.4px;top:434.8px;background:#bcbf70"></div>
<div class="ms" style="left:1275.2px;top:434.8px;background:#fdc060"></div>
<div class="ms" style="left:1286px;top:434.8px;background:#fda23c"></div>
<div class="ms" style="left:1296.9px;top:434.8px;background:#fdc4a4"></div>
<div class="ms" style="left:1307.7px;top:434.8px;background:#f79a64"></div>
<div class="t" style="left:1231.8px;top:446.1px;font-size:7.5px;color:#fff">1: 配色1</div>
<div class="a" style="left:1230.3px;top:457px;width:213.8px;height:23.2px;border:1px solid #ececec;border-radius:3px"></div>
<div class="ms" style="left:1231.9px;top:459px;background:#fbfaf4"></div>
<div class="ms" style="left:1242.7px;top:459px;background:#d5dfae"></div>
<div class="ms" style="left:1253.6px;top:459px;background:#b9c986"></div>
<div class="ms" style="left:1264.4px;top:459px;background:#a3b8a9"></div>
<div class="ms" style="left:1275.2px;top:459px;background:#e89098"></div>
<div class="ms" style="left:1286px;top:459px;background:#dc3b45"></div>
<div class="ms" style="left:1296.9px;top:459px;background:#ea9bab"></div>
<div class="ms" style="left:1307.7px;top:459px;background:#dc5f75"></div>
<div class="t" style="left:1231.4px;top:470.3px;font-size:7.5px;color:#fff">2: 配色2</div>
<div class="a" style="left:1226.3px;top:453.2px;width:220.6px;height:30.2px;border:2.2px solid #e8401f"></div>
<svg class="a" style="left:1229px;top:775px" width="70" height="12" viewBox="0 0 70 12" fill="none" stroke="#222" stroke-width="1">
  <path d="M5 5.9h6.2M8.1 2.8v6.2M17.9 5.9h6.6"/>
  <path d="M34.6 9V3.4M33.2 4.8l1.4-1.8l1.4 1.8M47.8 2.8V8.4M46.4 7l1.4 1.8l1.4-1.8" stroke-width="0.8"/>
  <path d="M57.7 4.6h6l-3 3.2z" fill="#222" stroke="none"/>
</svg>
<div class="a" style="left:1229.6px;top:771.6px;width:15.4px;height:14.8px;border:2px solid #e8401f"></div>
<svg class="a" style="left:1228px;top:708px" width="18" height="64" viewBox="0 0 18 64"><path d="M7.5 2.2H10V50H16.2L8.8 62.7L1.4 50H7.5Z" fill="#e8401f"/></svg>
</body>
</html>
